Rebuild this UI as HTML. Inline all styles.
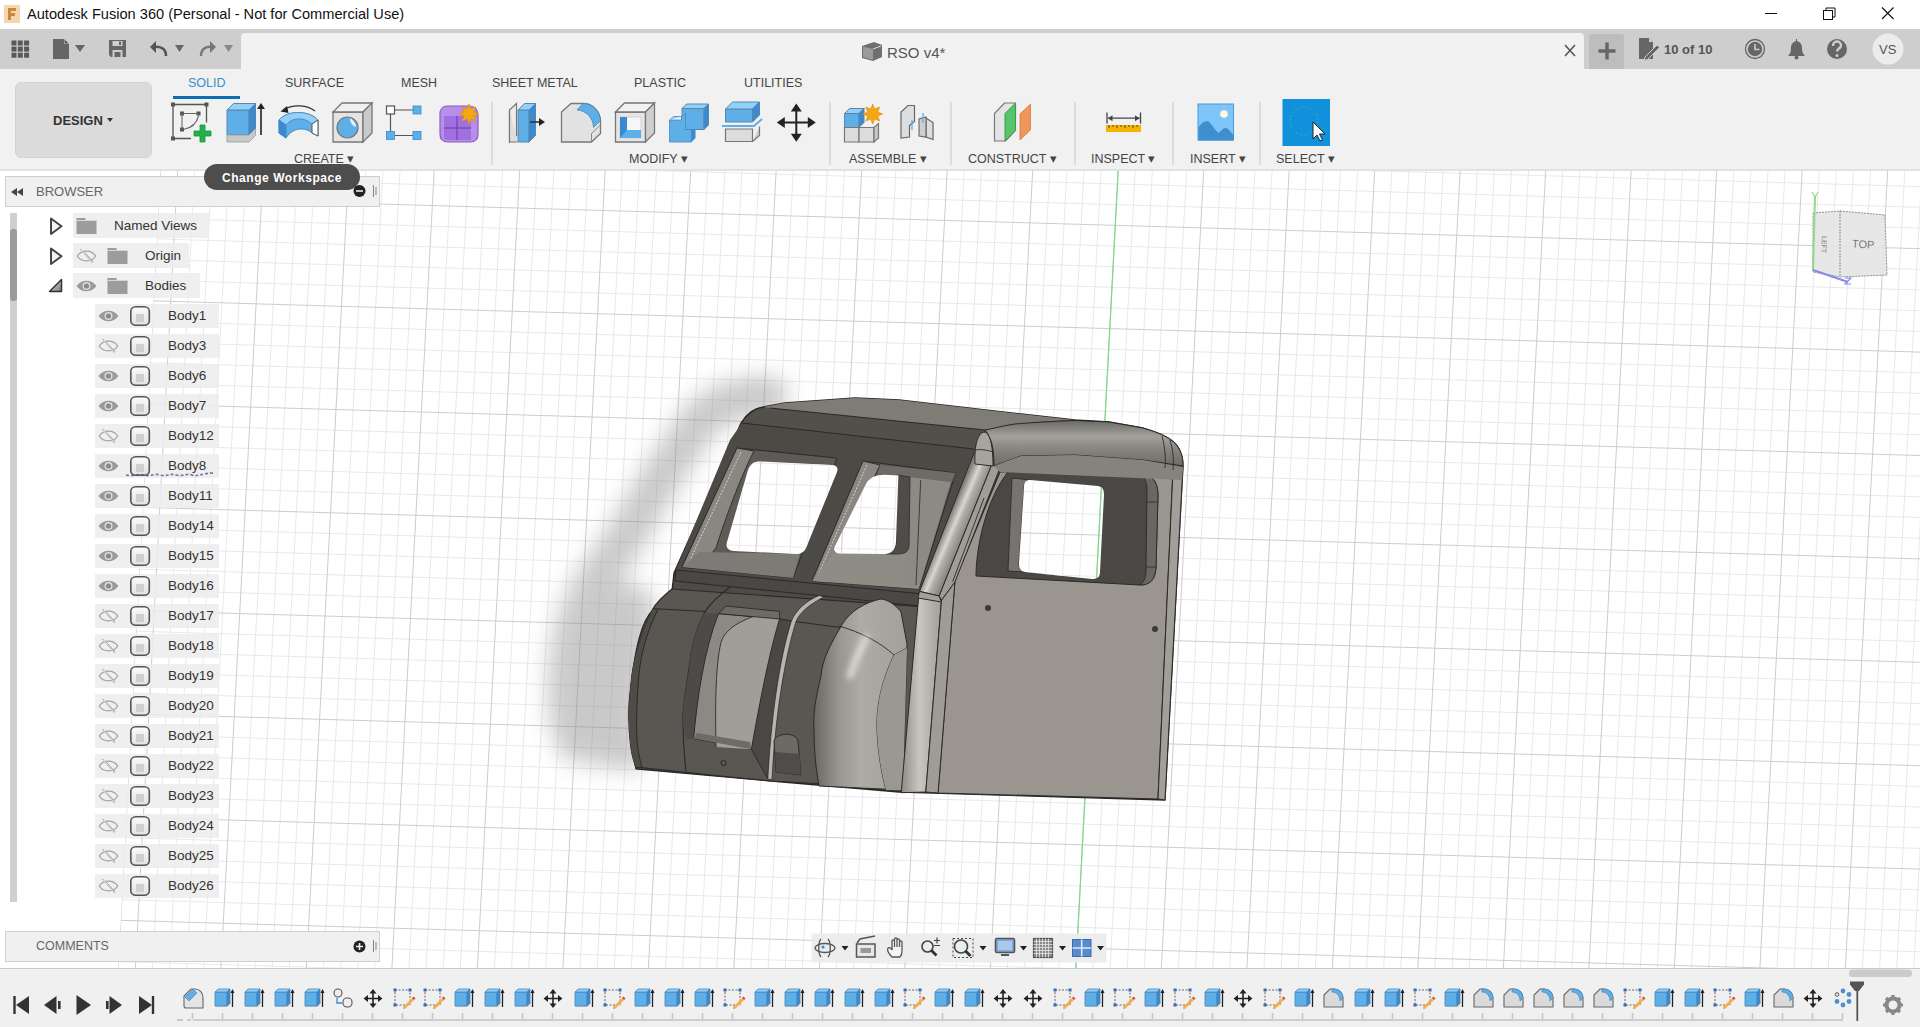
<!DOCTYPE html><html><head><meta charset="utf-8"><style>
*{box-sizing:border-box}
body{margin:0;width:1920px;height:1027px;position:relative;overflow:hidden;background:#f0f0f0;font-family:"Liberation Sans",sans-serif;color:#333}
.a{position:absolute}
.t{position:absolute;white-space:nowrap;line-height:1}
</style></head><body>
<svg class="a" style="left:0;top:0" width="1920" height="1027" viewBox="0 0 1920 1027"><defs><clipPath id="vpc"><rect x="0" y="170" width="1920" height="798"/></clipPath></defs><rect x="0" y="170" width="1920" height="798" fill="#fff"/><g clip-path="url(#vpc)"><clipPath id="gclip"><path d="M160.6 170L1920 170L1920 968L118.3 968Z"/></clipPath><g clip-path="url(#gclip)"><path d="M194.8 170L152.5 968M211.9 170L169.6 968M229.0 170L186.7 968M246.1 170L203.8 968M280.3 170L238.0 968M297.4 170L255.1 968M314.5 170L272.2 968M331.6 170L289.3 968M365.8 170L323.5 968M382.9 170L340.6 968M400.0 170L357.7 968M417.1 170L374.8 968M451.3 170L409.0 968M468.4 170L426.1 968M485.5 170L443.2 968M502.6 170L460.3 968M536.8 170L494.5 968M553.9 170L511.6 968M571.0 170L528.7 968M588.1 170L545.8 968M622.3 170L580.0 968M639.4 170L597.1 968M656.5 170L614.2 968M673.6 170L631.3 968M707.8 170L665.5 968M724.9 170L682.6 968M742.0 170L699.7 968M759.1 170L716.8 968M793.3 170L751.0 968M810.4 170L768.1 968M827.5 170L785.2 968M844.6 170L802.3 968M878.8 170L836.5 968M895.9 170L853.6 968M913.0 170L870.7 968M930.1 170L887.8 968M964.3 170L922.0 968M981.4 170L939.1 968M998.5 170L956.2 968M1015.6 170L973.3 968M1049.8 170L1007.5 968M1066.9 170L1024.6 968M1084.0 170L1041.7 968M1101.1 170L1058.8 968M1135.3 170L1093.0 968M1152.4 170L1110.1 968M1169.5 170L1127.2 968M1186.6 170L1144.3 968M1220.8 170L1178.5 968M1237.9 170L1195.6 968M1255.0 170L1212.7 968M1272.1 170L1229.8 968M1306.3 170L1264.0 968M1323.4 170L1281.1 968M1340.5 170L1298.2 968M1357.6 170L1315.3 968M1391.8 170L1349.5 968M1408.9 170L1366.6 968M1426.0 170L1383.7 968M1443.1 170L1400.8 968M1477.3 170L1435.0 968M1494.4 170L1452.1 968M1511.5 170L1469.2 968M1528.6 170L1486.3 968M1562.8 170L1520.5 968M1579.9 170L1537.6 968M1597.0 170L1554.7 968M1614.1 170L1571.8 968M1648.3 170L1606.0 968M1665.4 170L1623.1 968M1682.5 170L1640.2 968M1699.6 170L1657.3 968M1733.8 170L1691.5 968M1750.9 170L1708.6 968M1768.0 170L1725.7 968M1785.1 170L1742.8 968M1819.3 170L1777.0 968M1836.4 170L1794.1 968M1853.5 170L1811.2 968M1870.6 170L1828.3 968M1904.8 170L1862.5 968M1921.9 170L1879.6 968M1939.0 170L1896.7 968M1956.1 170L1913.8 968M0 110.3L1920 166.0M0 131.0L1920 186.6M0 151.6L1920 207.3M0 172.3L1920 228.0M0 213.7L1920 269.4M0 234.4L1920 290.0M0 255.0L1920 310.7M0 275.7L1920 331.4M0 317.1L1920 372.8M0 337.8L1920 393.4M0 358.4L1920 414.1M0 379.1L1920 434.8M0 420.5L1920 476.2M0 441.2L1920 496.8M0 461.8L1920 517.5M0 482.5L1920 538.2M0 523.9L1920 579.6M0 544.6L1920 600.2M0 565.2L1920 620.9M0 585.9L1920 641.6M0 627.3L1920 683.0M0 648.0L1920 703.6M0 668.6L1920 724.3M0 689.3L1920 745.0M0 730.7L1920 786.4M0 751.4L1920 807.0M0 772.0L1920 827.7M0 792.7L1920 848.4M0 834.1L1920 889.8M0 854.8L1920 910.4M0 875.4L1920 931.1M0 896.1L1920 951.8M0 937.5L1920 993.2M0 958.2L1920 1013.8" stroke="#e9e9e9" stroke-width="1" fill="none"/>
<path d="M160.6 170L118.3 968M177.7 170L135.4 968M263.2 170L220.9 968M348.7 170L306.4 968M434.2 170L391.9 968M519.7 170L477.4 968M605.2 170L562.9 968M690.7 170L648.4 968M776.2 170L733.9 968M861.7 170L819.4 968M947.2 170L904.9 968M1032.7 170L990.4 968M1118.2 170L1075.9 968M1203.7 170L1161.4 968M1289.2 170L1246.9 968M1374.7 170L1332.4 968M1460.2 170L1417.9 968M1545.7 170L1503.4 968M1631.2 170L1588.9 968M1716.7 170L1674.4 968M1802.2 170L1759.9 968M1887.7 170L1845.4 968M0 193.0L1920 248.7M0 296.4L1920 352.1M0 399.8L1920 455.5M0 503.2L1920 558.9M0 606.6L1920 662.3M0 710.0L1920 765.7M0 813.4L1920 869.1M0 916.8L1920 972.5" stroke="#cdcdcd" stroke-width="1" fill="none"/>
<path d="M1118.2 170L1075.9 968" stroke="#7fd87f" stroke-width="1.2" fill="none"/></g>
<defs>
<filter id="blur1" x="-50%" y="-50%" width="200%" height="200%"><feGaussianBlur stdDeviation="11"/></filter><filter id="blur2" x="-50%" y="-50%" width="200%" height="200%"><feGaussianBlur stdDeviation="3"/></filter>
<linearGradient id="fend" x1="0" y1="0" x2="1" y2="0"><stop offset="0" stop-color="#6a6762"/><stop offset="0.28" stop-color="#9a9791"/><stop offset="0.5" stop-color="#aeaba5"/><stop offset="1" stop-color="#a3a09a"/></linearGradient><linearGradient id="fhl" x1="0" y1="0" x2="0" y2="1"><stop offset="0" stop-color="#fff" stop-opacity="0.6"/><stop offset="1" stop-color="#fff" stop-opacity="0"/></linearGradient>
<linearGradient id="rroof" x1="0" y1="0" x2="0" y2="1">
<stop offset="0" stop-color="#6c6a66"/><stop offset="0.35" stop-color="#a3a19c"/><stop offset="0.6" stop-color="#8a8680"/><stop offset="1" stop-color="#6e6b66"/></linearGradient>
<linearGradient id="pill" x1="0" y1="0" x2="1" y2="0">
<stop offset="0" stop-color="#77746f"/><stop offset="0.45" stop-color="#d4d2cd"/><stop offset="1" stop-color="#8a8781"/></linearGradient>
<clipPath id="wins">
<path d="M760 461.5 L832 465 C837 465.5 838.5 468 837 472 L806 548 C804 552 801 554 796 554 L734 551 C728 550.5 725.5 547 727 542 L748 470 C750 464 754 461.5 760 461.5Z"/>
<path d="M884 474.8 L898.4 475.6 L896 542 C895.5 550 891 554 885 554 L840 553.4 C835 553.4 833 550 835 546 L866 484 C869 478 876 474.8 884 474.8Z"/>
<path d="M1030 480 L1098 486 C1103 487 1104 490 1104 495 L1100 572 C1100 577 1097 579 1092 579 L1025 572 C1020 571 1019 568 1019 563 L1024 487 C1024 482 1026 480 1030 480Z"/>
</clipPath>
</defs>
<!-- shadow -->
<g filter="url(#blur1)" opacity="0.45">
<path fill="none" stroke="#8a8a8a" stroke-width="40" stroke-linecap="round" stroke-linejoin="round" d="M768 396 C745 396 720 402 700 420 L662 476 L624 540 L590 590"/>
<path fill="#8a8a8a" d="M583 572 L650 590 L655 612 L640 772 L566 760 C549 742 546 702 549 662 C553 622 562 594 583 572 Z"/>
</g>
<!-- silhouette base -->
<path fill="#4d4b47" stroke="#262626" stroke-width="1.3" d="M741 423 C748 412 755 408 763 407 L785 403 L855 398 L899 400 L1021 414 L1075 420 L1109 422 L1143 428 C1160 433 1172 438 1178 447 C1183 455 1183 462 1183 466 L1165 800 L899 792 L771 781 L636 769 C630 740 628 712 630 698 C634 650 642 620 653 610 C660 600 668 594 672 591 L674 573 Z"/>
<!-- roof top -->
<path fill="#7f7c76" d="M763 407 L785 403 L855 398 L899 400 L1021 414 L1075 420 C1050 421 1021 422 985 430 L770 408 Z"/>
<path fill="#53504b" d="M742 423 C750 412 758 409 770 408 L985 430 L973 449 Z"/>
<path fill="#4d4a46" d="M742 423 L973 449 L985 470 L960 475 L675 572 L730 440 Z"/>
<path fill="none" stroke="#2a2a2a" stroke-width="1.1" d="M770 408 L985 430 M742 423 L974 449"/>
<!-- windshield frames (reveals) -->
<path fill="#5e5b56" stroke="#2a2a2a" stroke-width="1" d="M737 448 L837 458 L793 578 L682 567 Z"/>
<path fill="#8a8782" stroke="#2a2a2a" stroke-width="0.9" d="M737 448 L754 451 C744 470 728 510 716 548 L699 569 L682 567 Z"/>
<path fill="none" stroke="#d8d6d0" stroke-width="1" stroke-dasharray="2 1.5" d="M741 452 L688 564"/>
<path fill="#7e7b76" d="M699 552 L800 554 L793 578 L682 567 Z"/>
<path fill="#5e5b56" stroke="#2a2a2a" stroke-width="1" d="M863 461 L955.5 473 L919 589 L812 581 Z"/>
<path fill="#8a8782" stroke="#2a2a2a" stroke-width="0.9" d="M863 461 L880 465 C868 490 850 530 838 555 L828 583 L812 581 Z"/>
<path fill="none" stroke="#d8d6d0" stroke-width="1" stroke-dasharray="2 1.5" d="M867 465 L818 575"/>
<path fill="#6e6b66" d="M880 465 L955.5 473 L952 482 L878 474Z"/>
<path fill="#8f8c86" d="M834 553 L912 553 L919 589 L812 581 Z"/>
<path fill="#8d8a84" d="M909 477 L951 482 L919 588 L905 584 Z"/>
<path fill="none" stroke="#2a2a2a" stroke-width="0.8" d="M920.7 480 L916 585"/>
<path fill="#4f4d49" stroke="#2a2a2a" stroke-width="0.8" d="M897 475 L910 477 L909 545 C909 551 905 554 898 554 L886 554 C893 552 896 549 896 543 Z"/>
<!-- belt band -->
<path fill="#4a4844" stroke="#2a2a2a" stroke-width="1" d="M676 570 L923 594 L940 598 L940 608 L675 581 Z"/>
<!-- nose lower -->
<path fill="#5a5752" stroke="#2a2a2a" stroke-width="1.1" d="M672 589 L940 608 L935 790 L771 781 L730 777 L636 767 C633 760 631 752 630 740 C628 720 629 700 630.5 688 C632 668 636 650 644 630 C648 620 651 612 653 608.6 C657 602 662 597 672 589 Z"/>
<path fill="#4f4c48" d="M653 608.6 L658 609.6 C650 625 643 645 640 666 C637 690 636 720 637 740 C638 752 640 760 642 767 L636 767 C633 760 631 752 630 740 C628 720 629 700 630.5 688 C632 668 636 650 644 630 C648 620 651 612 653 608.6Z"/>
<path fill="none" stroke="#2a2a2a" stroke-width="1" d="M653 608.6 L706 611.5 M718.5 613.6 L780 619 L791.4 621 L840 627.5 M658 609.6 C650 625 643 645 640 666 C637 690 636 720 637 740 C638 752 640 760 642 767"/>
<path fill="none" stroke="#2a2a2a" stroke-width="1.1" d="M730 587 C718 596 709 605 704.3 612.9 C696 630 691 648 689.3 666.4 C686 690 683 705 682.9 720 C683 740 684 755 686 771.4"/>
<path fill="#4d4b47" d="M704.3 612.9 L718.5 613.6 C710 640 704 670 699 700 C697 715 695 728 693.6 738.6 L686 740 C684 730 683 725 682.9 720 C683 705 686 690 689.3 666.4 C691 648 696 630 704.3 612.9Z"/>
<!-- headlight recess -->
<path fill="#8c8984" stroke="#2a2a2a" stroke-width="1" d="M718.5 613.6 L779.6 619 C770 650 760 700 751.4 749.3 L693.6 738.6 C697 700 704 650 718.5 613.6 Z"/>
<path fill="#a19e98" d="M755 615.7 L779.6 619 C770 650 760 700 751.4 749.3 L716 747 C715 700 716 665 720.7 643.5 C724 632 733 624 755 615.7Z"/>
<path fill="none" stroke="#2a2a2a" stroke-width="0.9" d="M755 615.7 C733 624 724 632 720.7 643.5 C716 665 715 700 716 747"/>
<path fill="#6e6b66" stroke="#2a2a2a" stroke-width="0.9" d="M726 606 L779.6 611.4 L779.6 619 L718.5 613.6 Z"/>
<path fill="#6e6b66" d="M693.6 738.6 L751.4 749.3 L750 742 L697 733Z"/>
<path fill="#4a4844" stroke="#2a2a2a" stroke-width="0.9" d="M779.6 619 L791.4 621 C782 650 773 700 767.8 779 L751.4 749.3 C760 700 770 650 779.6 619Z"/>
<path fill="#b9b6b0" stroke="#2a2a2a" stroke-width="0.7" d="M819.2 595.4 L824 597 C810 604 800 612 796 621.5 C784 660 775 720 772 779.5 L767.8 779.3 C771 720 779 660 791.4 621 C796 610 806 601 819.2 595.4Z"/>
<path fill="#6c6a65" stroke="#2a2a2a" stroke-width="1" d="M774 741 C776 733 795 731 798 741 L801 775 L776 772 Z"/>
<path fill="#4f4d49" d="M775 752 L799.5 754 L801 775 L776 772 Z"/>
<circle cx="723.6" cy="763" r="2.6" fill="none" stroke="#2a2a2a" stroke-width="1"/>
<!-- fender -->
<path fill="url(#fend)" stroke="#2a2a2a" stroke-width="1" d="M881 599 C865 602 850 612 843 623 C830 645 822 660 821 676 C815 700 813 715 814 730 C814 750 816 770 819 786 L903 790 L907 644 L901 612 C895 604 888 600 881 599 Z"/>
<path fill="none" stroke="#2a2a2a" stroke-width="0.9" d="M839 626 C860 632 880 642 894 655 L907 648 M894 655 C882 680 876 705 877 730 C878 755 882 775 886 790"/>
<path fill="#9b9891" d="M894 655 C882 680 876 705 877 730 C878 755 882 775 886 790 L903 790 L907 648Z"/>
<path filter="url(#blur2)" fill="none" stroke="#f0eee8" stroke-width="6" stroke-linecap="round" opacity="0.85" d="M866 638 C860 650 854 662 850 676"/>
<!-- door -->
<path fill="#9a968f" stroke="#2a2a2a" stroke-width="1.1" d="M1000 472 L1173 470 L1158 799 L938 793 L955 580 Z"/>
<!-- A-pillar -->
<linearGradient id="pillg" gradientUnits="userSpaceOnUse" x1="946.7" y1="522" x2="965.3" y2="530"><stop offset="0" stop-color="#7f7c77"/><stop offset="0.4" stop-color="#d9d7d2"/><stop offset="0.6" stop-color="#b2afa9"/><stop offset="1" stop-color="#8c8983"/></linearGradient>
<linearGradient id="pillg2" x1="0" y1="0" x2="1" y2="0"><stop offset="0" stop-color="#8e8b85"/><stop offset="0.45" stop-color="#c9c6c0"/><stop offset="1" stop-color="#a19e98"/></linearGradient>
<path fill="url(#pillg2)" stroke="#2a2a2a" stroke-width="1" d="M919 593 L941.5 600 L925.8 792 L901.2 792.7 Z"/>
<path fill="#9f9c96" stroke="#2a2a2a" stroke-width="1" d="M941.5 600 L954.9 582 L938.1 793 L925.8 792 Z"/>
<path fill="#a09d97" stroke="#2a2a2a" stroke-width="1" d="M991.6 464.8 L1000 468 L954.9 582 L941.5 600 L939 596 Z"/>
<path fill="none" stroke="#2a2a2a" stroke-width="0.9" d="M984 498 L952.6 581.7"/>
<path fill="url(#pillg)" stroke="#2a2a2a" stroke-width="1" d="M974 453 L991.6 464.8 L939 596 L919.5 591.4 Z"/>
<path fill="#a3a09a" stroke="#2a2a2a" stroke-width="1" d="M919.5 591.4 L939 596 L941.5 602 L918 598 Z"/>
<path fill="#a7a49e" stroke="#2a2a2a" stroke-width="1" d="M975 464 C974 445 978 433 984 432 C990 432 993 445 993 466 Z"/>
<path fill="none" stroke="#2a2a2a" stroke-width="0.9" d="M975 450 C980 449 988 450 993 452"/>
<!-- side window recess -->
<path fill="#a29f99" stroke="#2a2a2a" stroke-width="1" d="M1173 470 L1183 466 L1165 800 L1158 799 Z"/>
<path fill="#4a4844" stroke="#2a2a2a" stroke-width="1" d="M1009 470.6 L1137 472 C1150 473 1158 480 1158 495 L1156 568 C1155 580 1150 585 1140 585 L976 576 C976 550 985 500 1009 470.6 Z"/>
<path fill="#6a6762" stroke="#2a2a2a" stroke-width="0.9" d="M1137 472 C1150 473 1158 480 1158 495 L1156 568 C1155 580 1150 585 1140 585 C1144 582 1146 578 1146 570 L1147 490 C1147 480 1143 474 1137 472 Z"/>
<path fill="none" stroke="#2a2a2a" stroke-width="0.8" d="M1147 502 L1158 502 M1146 567 L1156 567"/>
<path fill="#77746f" stroke="#2a2a2a" stroke-width="0.8" d="M1012 478 L1030 480 C1025 481 1024 484 1024 488 L1019 563 C1019 568 1020 571 1025 572 L1008 571 Z"/>
<!-- right curved roof -->
<path fill="url(#rroof)" stroke="#2a2a2a" stroke-width="1" d="M985 430 C1000 427 1010 424 1021 423.5 C1040 422 1060 421 1075 420.5 L1109 422 L1143 428 C1160 433 1172 438 1178 447 C1183 455 1183 462 1183 466 L1143 460 L1075 455 L1021 456 L994 466 C994 450 992 438 985 430 Z"/>
<path fill="#86837d" d="M994 466 L1021 456 L1075 455 L1143 460 L1183 467 L1182 480 L1000 472 Z"/><path fill="none" stroke="#2a2a2a" stroke-width="0.9" d="M1162 436 C1165 448 1166 458 1165 468 M1170 440 C1173 450 1174 460 1173 470"/>
<!-- rivets -->
<circle cx="988" cy="608" r="3" fill="#3a3a3a"/><circle cx="1155" cy="629" r="3" fill="#3a3a3a"/>
<!-- window holes -->
<g clip-path="url(#wins)"><rect x="700" y="450" width="420" height="140" fill="#fff"/><clipPath id="gclip"><path d="M160.6 170L1920 170L1920 968L118.3 968Z"/></clipPath><g clip-path="url(#gclip)"><path d="M194.8 170L152.5 968M211.9 170L169.6 968M229.0 170L186.7 968M246.1 170L203.8 968M280.3 170L238.0 968M297.4 170L255.1 968M314.5 170L272.2 968M331.6 170L289.3 968M365.8 170L323.5 968M382.9 170L340.6 968M400.0 170L357.7 968M417.1 170L374.8 968M451.3 170L409.0 968M468.4 170L426.1 968M485.5 170L443.2 968M502.6 170L460.3 968M536.8 170L494.5 968M553.9 170L511.6 968M571.0 170L528.7 968M588.1 170L545.8 968M622.3 170L580.0 968M639.4 170L597.1 968M656.5 170L614.2 968M673.6 170L631.3 968M707.8 170L665.5 968M724.9 170L682.6 968M742.0 170L699.7 968M759.1 170L716.8 968M793.3 170L751.0 968M810.4 170L768.1 968M827.5 170L785.2 968M844.6 170L802.3 968M878.8 170L836.5 968M895.9 170L853.6 968M913.0 170L870.7 968M930.1 170L887.8 968M964.3 170L922.0 968M981.4 170L939.1 968M998.5 170L956.2 968M1015.6 170L973.3 968M1049.8 170L1007.5 968M1066.9 170L1024.6 968M1084.0 170L1041.7 968M1101.1 170L1058.8 968M1135.3 170L1093.0 968M1152.4 170L1110.1 968M1169.5 170L1127.2 968M1186.6 170L1144.3 968M1220.8 170L1178.5 968M1237.9 170L1195.6 968M1255.0 170L1212.7 968M1272.1 170L1229.8 968M1306.3 170L1264.0 968M1323.4 170L1281.1 968M1340.5 170L1298.2 968M1357.6 170L1315.3 968M1391.8 170L1349.5 968M1408.9 170L1366.6 968M1426.0 170L1383.7 968M1443.1 170L1400.8 968M1477.3 170L1435.0 968M1494.4 170L1452.1 968M1511.5 170L1469.2 968M1528.6 170L1486.3 968M1562.8 170L1520.5 968M1579.9 170L1537.6 968M1597.0 170L1554.7 968M1614.1 170L1571.8 968M1648.3 170L1606.0 968M1665.4 170L1623.1 968M1682.5 170L1640.2 968M1699.6 170L1657.3 968M1733.8 170L1691.5 968M1750.9 170L1708.6 968M1768.0 170L1725.7 968M1785.1 170L1742.8 968M1819.3 170L1777.0 968M1836.4 170L1794.1 968M1853.5 170L1811.2 968M1870.6 170L1828.3 968M1904.8 170L1862.5 968M1921.9 170L1879.6 968M1939.0 170L1896.7 968M1956.1 170L1913.8 968M0 110.3L1920 166.0M0 131.0L1920 186.6M0 151.6L1920 207.3M0 172.3L1920 228.0M0 213.7L1920 269.4M0 234.4L1920 290.0M0 255.0L1920 310.7M0 275.7L1920 331.4M0 317.1L1920 372.8M0 337.8L1920 393.4M0 358.4L1920 414.1M0 379.1L1920 434.8M0 420.5L1920 476.2M0 441.2L1920 496.8M0 461.8L1920 517.5M0 482.5L1920 538.2M0 523.9L1920 579.6M0 544.6L1920 600.2M0 565.2L1920 620.9M0 585.9L1920 641.6M0 627.3L1920 683.0M0 648.0L1920 703.6M0 668.6L1920 724.3M0 689.3L1920 745.0M0 730.7L1920 786.4M0 751.4L1920 807.0M0 772.0L1920 827.7M0 792.7L1920 848.4M0 834.1L1920 889.8M0 854.8L1920 910.4M0 875.4L1920 931.1M0 896.1L1920 951.8M0 937.5L1920 993.2M0 958.2L1920 1013.8" stroke="#e9e9e9" stroke-width="1" fill="none"/>
<path d="M160.6 170L118.3 968M177.7 170L135.4 968M263.2 170L220.9 968M348.7 170L306.4 968M434.2 170L391.9 968M519.7 170L477.4 968M605.2 170L562.9 968M690.7 170L648.4 968M776.2 170L733.9 968M861.7 170L819.4 968M947.2 170L904.9 968M1032.7 170L990.4 968M1118.2 170L1075.9 968M1203.7 170L1161.4 968M1289.2 170L1246.9 968M1374.7 170L1332.4 968M1460.2 170L1417.9 968M1545.7 170L1503.4 968M1631.2 170L1588.9 968M1716.7 170L1674.4 968M1802.2 170L1759.9 968M1887.7 170L1845.4 968M0 193.0L1920 248.7M0 296.4L1920 352.1M0 399.8L1920 455.5M0 503.2L1920 558.9M0 606.6L1920 662.3M0 710.0L1920 765.7M0 813.4L1920 869.1M0 916.8L1920 972.5" stroke="#cdcdcd" stroke-width="1" fill="none"/>
<path d="M1118.2 170L1075.9 968" stroke="#7fd87f" stroke-width="1.2" fill="none"/></g>
</g>
</g></svg>
<div class="a" style="left:0;top:0;width:1920px;height:29px;background:#fff"></div>
<div class="t" style="left:27px;top:7px;font-size:14.6px;color:#111">Autodesk Fusion 360 (Personal - Not for Commercial Use)</div>
<div class="a" style="left:0;top:29px;width:1920px;height:40px;background:#cecece"></div>
<div class="a" style="left:241px;top:33px;width:1343px;height:36px;background:#f2f2f2;border-radius:4px 4px 0 0"></div>
<div class="a" style="left:1589px;top:34px;width:35px;height:35px;background:#bdbdbd;border-radius:3px 3px 0 0"></div>
<div class="t" style="left:887px;top:45px;font-size:15px;color:#555">RSO v4*</div>
<div class="t" style="left:1664px;top:43px;font-size:13px;color:#555;font-weight:bold">10 of 10</div>
<div class="a" style="left:0;top:69px;width:1920px;height:101px;background:#f1f1f1"></div>
<div class="a" style="left:0;top:169px;width:1920px;height:2px;background:#e2e2e2"></div>
<div class="a" style="left:15px;top:82px;width:137px;height:76px;background:#dbdbdb;border:1px solid #d3d3d3;border-radius:6px"></div>
<div class="t" style="left:53px;top:114px;font-size:13px;color:#333;font-weight:bold">DESIGN</div>
<div class="t" style="left:188px;top:77px;font-size:12.5px;color:#3a8fc8">SOLID</div>
<div class="t" style="left:285px;top:77px;font-size:12.5px;color:#444">SURFACE</div>
<div class="t" style="left:401px;top:77px;font-size:12.5px;color:#444">MESH</div>
<div class="t" style="left:492px;top:77px;font-size:12.5px;color:#444">SHEET METAL</div>
<div class="t" style="left:634px;top:77px;font-size:12.5px;color:#444">PLASTIC</div>
<div class="t" style="left:744px;top:77px;font-size:12.5px;color:#444">UTILITIES</div>
<div class="a" style="left:173px;top:96px;width:67px;height:3px;background:#0b6fb3"></div>
<div class="t" style="left:294px;top:153px;font-size:12.5px;color:#444">CREATE &#9662;</div>
<div class="t" style="left:629px;top:153px;font-size:12.5px;color:#444">MODIFY &#9662;</div>
<div class="t" style="left:849px;top:153px;font-size:12.5px;color:#444">ASSEMBLE &#9662;</div>
<div class="t" style="left:968px;top:153px;font-size:12.5px;color:#444">CONSTRUCT &#9662;</div>
<div class="t" style="left:1091px;top:153px;font-size:12.5px;color:#444">INSPECT &#9662;</div>
<div class="t" style="left:1190px;top:153px;font-size:12.5px;color:#444">INSERT &#9662;</div>
<div class="t" style="left:1276px;top:153px;font-size:12.5px;color:#444">SELECT &#9662;</div>
<div class="a" style="left:491px;top:102px;width:2px;height:63px;background:#dcdcdc"></div>
<div class="a" style="left:829px;top:102px;width:2px;height:63px;background:#dcdcdc"></div>
<div class="a" style="left:950px;top:102px;width:2px;height:63px;background:#dcdcdc"></div>
<div class="a" style="left:1074px;top:102px;width:2px;height:63px;background:#dcdcdc"></div>
<div class="a" style="left:1172px;top:102px;width:2px;height:63px;background:#dcdcdc"></div>
<div class="a" style="left:1259px;top:102px;width:2px;height:63px;background:#dcdcdc"></div>

<div class="a" style="left:5px;top:176px;width:375px;height:31px;background:#f0f0f0;border:1px solid #cfcfcf"></div>
<div class="t" style="left:36px;top:185px;font-size:13px;color:#666">BROWSER</div>
<div class="a" style="left:10px;top:213px;width:7px;height:689px;background:#cfcfcf"></div>
<div class="a" style="left:10px;top:229px;width:7px;height:72px;background:#9b9b9b;border-radius:3px"></div>
<div class="a" style="left:73px;top:213px;width:136px;height:25px;background:rgba(236,236,236,.85)"></div>
<div class="t" style="left:114px;top:219px;font-size:13.5px;color:#333">Named Views</div>
<div class="a" style="left:73px;top:243px;width:116px;height:25px;background:rgba(236,236,236,.85)"></div>
<div class="t" style="left:145px;top:249px;font-size:13.5px;color:#333">Origin</div>
<div class="a" style="left:73px;top:273px;width:127px;height:25px;background:rgba(236,236,236,.85)"></div>
<div class="t" style="left:145px;top:279px;font-size:13.5px;color:#333">Bodies</div>
<div class="a" style="left:95px;top:304px;width:124px;height:24px;background:rgba(236,236,236,.85)"></div>
<div class="t" style="left:168px;top:309px;font-size:13.5px;color:#333">Body1</div>
<div class="a" style="left:95px;top:334px;width:124px;height:24px;background:rgba(236,236,236,.85)"></div>
<div class="t" style="left:168px;top:339px;font-size:13.5px;color:#333">Body3</div>
<div class="a" style="left:95px;top:364px;width:124px;height:24px;background:rgba(236,236,236,.85)"></div>
<div class="t" style="left:168px;top:369px;font-size:13.5px;color:#333">Body6</div>
<div class="a" style="left:95px;top:394px;width:124px;height:24px;background:rgba(236,236,236,.85)"></div>
<div class="t" style="left:168px;top:399px;font-size:13.5px;color:#333">Body7</div>
<div class="a" style="left:95px;top:424px;width:124px;height:24px;background:rgba(236,236,236,.85)"></div>
<div class="t" style="left:168px;top:429px;font-size:13.5px;color:#333">Body12</div>
<div class="a" style="left:95px;top:454px;width:124px;height:24px;background:rgba(236,236,236,.85)"></div>
<div class="t" style="left:168px;top:459px;font-size:13.5px;color:#333">Body8</div>
<div class="a" style="left:95px;top:484px;width:124px;height:24px;background:rgba(236,236,236,.85)"></div>
<div class="t" style="left:168px;top:489px;font-size:13.5px;color:#333">Body11</div>
<div class="a" style="left:95px;top:514px;width:124px;height:24px;background:rgba(236,236,236,.85)"></div>
<div class="t" style="left:168px;top:519px;font-size:13.5px;color:#333">Body14</div>
<div class="a" style="left:95px;top:544px;width:124px;height:24px;background:rgba(236,236,236,.85)"></div>
<div class="t" style="left:168px;top:549px;font-size:13.5px;color:#333">Body15</div>
<div class="a" style="left:95px;top:574px;width:124px;height:24px;background:rgba(236,236,236,.85)"></div>
<div class="t" style="left:168px;top:579px;font-size:13.5px;color:#333">Body16</div>
<div class="a" style="left:95px;top:604px;width:124px;height:24px;background:rgba(236,236,236,.85)"></div>
<div class="t" style="left:168px;top:609px;font-size:13.5px;color:#333">Body17</div>
<div class="a" style="left:95px;top:634px;width:124px;height:24px;background:rgba(236,236,236,.85)"></div>
<div class="t" style="left:168px;top:639px;font-size:13.5px;color:#333">Body18</div>
<div class="a" style="left:95px;top:664px;width:124px;height:24px;background:rgba(236,236,236,.85)"></div>
<div class="t" style="left:168px;top:669px;font-size:13.5px;color:#333">Body19</div>
<div class="a" style="left:95px;top:694px;width:124px;height:24px;background:rgba(236,236,236,.85)"></div>
<div class="t" style="left:168px;top:699px;font-size:13.5px;color:#333">Body20</div>
<div class="a" style="left:95px;top:724px;width:124px;height:24px;background:rgba(236,236,236,.85)"></div>
<div class="t" style="left:168px;top:729px;font-size:13.5px;color:#333">Body21</div>
<div class="a" style="left:95px;top:754px;width:124px;height:24px;background:rgba(236,236,236,.85)"></div>
<div class="t" style="left:168px;top:759px;font-size:13.5px;color:#333">Body22</div>
<div class="a" style="left:95px;top:784px;width:124px;height:24px;background:rgba(236,236,236,.85)"></div>
<div class="t" style="left:168px;top:789px;font-size:13.5px;color:#333">Body23</div>
<div class="a" style="left:95px;top:814px;width:124px;height:24px;background:rgba(236,236,236,.85)"></div>
<div class="t" style="left:168px;top:819px;font-size:13.5px;color:#333">Body24</div>
<div class="a" style="left:95px;top:844px;width:124px;height:24px;background:rgba(236,236,236,.85)"></div>
<div class="t" style="left:168px;top:849px;font-size:13.5px;color:#333">Body25</div>
<div class="a" style="left:95px;top:874px;width:124px;height:24px;background:rgba(236,236,236,.85)"></div>
<div class="t" style="left:168px;top:879px;font-size:13.5px;color:#333">Body26</div>
<div class="a" style="left:5px;top:931px;width:375px;height:31px;background:#f0f0f0;border:1px solid #cfcfcf"></div>
<div class="t" style="left:36px;top:940px;font-size:12.5px;color:#666">COMMENTS</div>
<div class="a" style="left:204px;top:164px;width:156px;height:26px;background:#4d4d4d;border-radius:13px"></div>
<div class="t" style="left:222px;top:172px;font-size:12px;letter-spacing:0.55px;color:#fff;font-weight:bold">Change Workspace</div>
<div class="a" style="left:0;top:968px;width:1920px;height:59px;background:#f0f0f0;border-top:1px solid #c9c9c9"></div>
<svg class="a" style="left:0;top:0" width="1920" height="1027" viewBox="0 0 1920 1027"><rect x="4" y="5" width="16" height="18" fill="#f6d6b0"/><path d="M8 8h8v3h-5v2h4v3h-4v4h-3z" fill="#c88a3a"/>
<rect x="11.5" y="40.5" width="5" height="5" fill="#595959"/>
<rect x="11.5" y="46.6" width="5" height="5" fill="#595959"/>
<rect x="11.5" y="52.7" width="5" height="5" fill="#595959"/>
<rect x="17.8" y="40.5" width="5" height="5" fill="#595959"/>
<rect x="17.8" y="46.6" width="5" height="5" fill="#595959"/>
<rect x="17.8" y="52.7" width="5" height="5" fill="#595959"/>
<rect x="24.1" y="40.5" width="5" height="5" fill="#595959"/>
<rect x="24.1" y="46.6" width="5" height="5" fill="#595959"/>
<rect x="24.1" y="52.7" width="5" height="5" fill="#595959"/>
<path d="M53 39h11l5 5v15h-16z" fill="#666"/><path d="M64 39v5h5z" fill="#cecece"/><path d="M64.5 39.5l4 4h-4z" fill="#555"/>
<path d="M75 45h10l-5 7z" fill="#666"/>
<path d="M109 40h17v17h-15l-2-2z" fill="#666"/><rect x="112.5" y="41" width="10" height="5" fill="#cecece"/><rect x="119" y="41.5" width="2" height="3.5" fill="#666"/><rect x="112.5" y="50" width="10" height="7" fill="#cecece"/><rect x="114.5" y="52" width="6" height="5" fill="#666"/>
<path d="M166 56 C166 48 160 46 153 47" fill="none" stroke="#555" stroke-width="2.6"/><path d="M150 47l6-6v12z" fill="#555"/>
<path d="M175 45h9l-4.5 7z" fill="#666"/>
<path d="M201 56 C201 48 207 46 213 47" fill="none" stroke="#777" stroke-width="2.4"/><path d="M216 47l-6-6v12z" fill="#777"/>
<path d="M224 45h9l-4.5 7z" fill="#888"/>
<path d="M862 46l12-4l8 3v12l-9 4l-11-3z" fill="#6f6f6f"/><path d="M863 46.5l10 2.5v11l-10-3z" fill="#9a9a9a"/><path d="M873 49l8-3" stroke="#ddd" stroke-width="1"/>
<path d="M1565 45l10 11M1575 45l-10 11" stroke="#555" stroke-width="1.6"/>
<path d="M1598.5 51h17M1607 42.5v17" stroke="#666" stroke-width="3.5"/>
<path d="M1639 38h10l4 4v17h-14z" fill="#666"/><path d="M1649 38v4h4z" fill="#cecece"/><path d="M1645 57l12-12l2.5 2.5l-12 12l-3.5 1z" fill="#666" stroke="#cecece" stroke-width="1"/>
<circle cx="1755" cy="49" r="9.5" fill="none" stroke="#666" stroke-width="1.3"/><circle cx="1755" cy="49" r="7.2" fill="#666"/><path d="M1755 44v5.5h4.5" fill="none" stroke="#cecece" stroke-width="1.6"/>
<path d="M1788 56h17c-2-2-3-4-3-8c0-4-2-6-5-7v-2h-1v2c-3 1-5 3-5 7c0 4-1 6-3 8z" fill="#666"/><circle cx="1796.5" cy="57.5" r="2" fill="#666"/>
<circle cx="1837" cy="49" r="10" fill="#666"/><path d="M1833 46c0-3 2-4.5 4-4.5s4 1.5 4 4c0 3-4 3-4 6" fill="none" stroke="#cecece" stroke-width="2.4"/><circle cx="1837" cy="55.5" r="1.5" fill="#cecece"/>
<circle cx="1888" cy="49" r="15.5" fill="#ececec"/>
<path d="M1765 13.5h12" stroke="#111" stroke-width="1"/>
<rect x="1823.5" y="10.5" width="9" height="9" fill="none" stroke="#111" stroke-width="1"/><path d="M1826 10.5v-2.5h9v9h-2.5" fill="none" stroke="#111" stroke-width="1"/>
<path d="M1882 7.5l11.5 11.5M1893.5 7.5l-11.5 11.5" stroke="#111" stroke-width="1.1"/>
<path d="M107 118h6l-3 4z" fill="#333"/><path d="M173 104.5h33.5M173 104.5v34M173 138.5h18M206.5 104.5v18" stroke="#555" stroke-width="1.3" fill="none"/>
<rect x="171" y="102.5" width="4" height="4" fill="#555"/>
<rect x="204.5" y="102.5" width="4" height="4" fill="#555"/>
<rect x="171" y="136.5" width="4" height="4" fill="#555"/>
<rect x="180" y="111.5" width="4" height="4" fill="#555"/>
<rect x="196.5" y="111.5" width="4" height="4" fill="#555"/>
<rect x="180" y="127.5" width="4" height="4" fill="#555"/>
<path d="M182 113.5v16M182 113.5h16.5M198.5 116c-2 8-7 12-15 13.5" stroke="#666" stroke-width="1.1" fill="none"/>
<path d="M200 125h5v6h6v5h-6v6h-5v-6h-6v-5h6z" fill="#21b04b" stroke="#159a3c" stroke-width="0.8"/>
<path d="M227 110h22v25h-22z" fill="#5eaee8" stroke="#5a86ad" stroke-width="1"/><path d="M227 110l6.5 -6.5h22l-6.5 6.5z" fill="#93d0f7" stroke="#5a86ad" stroke-width="1"/><path d="M249 110l6.5 -6.5v25l-6.5 6.5z" fill="#3a8ad0" stroke="#5a86ad" stroke-width="1"/>
<path d="M227 135h22l6.5-6.5v7l-6.5 6.5h-22z" fill="#c9c9c9" stroke="#9a9a9a" stroke-width="0.8"/>
<path d="M261 135V107" stroke="#222" stroke-width="1.6"/><path d="M257 109l4-6l4 6z" fill="#222"/>
<path d="M279 120 C287 110 309 110 318 120 L318 136 L312 133 C305 127 293 127 286 138 L279 133 Z" fill="#5eaee8" stroke="#4a86ba" stroke-width="0.9"/>
<path d="M279 120 C287 110 309 110 318 120 L312 124 C305 117 292 117 286 125 Z" fill="#93d0f7" stroke="#4a86ba" stroke-width="0.8"/>
<path d="M279 120 L286 125 L286 138 L279 133 Z" fill="#3a8ad0" stroke="#4a86ba" stroke-width="0.8"/>
<path d="M312 124 L318 120 L318 136 L312 133 Z" fill="#fff" stroke="#555" stroke-width="1"/>
<path d="M315 111c-8-6-21-7-30-2" fill="none" stroke="#333" stroke-width="1.3"/><path d="M280.5 111.5l6.5-5.5l1.5 7z" fill="#222"/>
<path d="M333 112h30v30h-30z" fill="#e4e4e4" stroke="#777" stroke-width="1.3"/><path d="M333 112l9 -9h30l-9 9z" fill="#f0f0f0" stroke="#777" stroke-width="1.3"/><path d="M363 112l9 -9v30l-9 9z" fill="#c9c9c9" stroke="#777" stroke-width="1.3"/>
<circle cx="347.5" cy="127.5" r="10.5" fill="#5eaee8" stroke="#777" stroke-width="1.2"/><path d="M350 118c3 2 6 5 6 9c-3-1-6-4-6-9z" fill="#eaf4fb"/>
<path d="M394.5 110h22M390.5 114v21M394.5 135.5h22" stroke="#555" stroke-width="1.2"/>
<rect x="386.5" y="106" width="8" height="8" fill="#fff" stroke="#555" stroke-width="1.2"/>
<rect x="413" y="106" width="8" height="8" fill="#5eaee8" stroke="#3a8ad0" stroke-width="0.8"/>
<rect x="386.5" y="131.5" width="8" height="8" fill="#5eaee8" stroke="#3a8ad0" stroke-width="0.8"/>
<rect x="413" y="131.5" width="8" height="8" fill="#5eaee8" stroke="#3a8ad0" stroke-width="0.8"/>
<path d="M447 106h22c6 0 9 4 9 10v18c0 5-3 8-8 8h-22c-5 0-8-3-8-8v-20c0-5 3-8 7-8z" fill="#b98ee8" stroke="#8a5cc8" stroke-width="1.2"/>
<path d="M444 116h27v24h-24c-2 0-3-1-3-3z" fill="#a070e0"/><path d="M457 116v24M444 128h27" stroke="#6a3ab0" stroke-width="1"/>
<path d="M469 104l2 5l5-2l-2 5l5 2l-5 2l2 5l-5-2l-2 5l-2-5l-5 2l2-5l-5-2l5-2l-2-5l5 2z" fill="#f3a712" stroke="#e28a00" stroke-width="0.6"/>
<path d="M509.5 142V110l7-6.5v32z" fill="#ececec" stroke="#777" stroke-width="1.2"/><path d="M509.5 110v32h8" fill="#ddd" stroke="#777" stroke-width="1.2"/>
<path d="M518 110h11v32h-11z" fill="#5eaee8" stroke="#5a86ad" stroke-width="1"/><path d="M518 110l6.5 -6.5h11l-6.5 6.5z" fill="#93d0f7" stroke="#5a86ad" stroke-width="1"/><path d="M529 110l6.5 -6.5v32l-6.5 6.5z" fill="#3a8ad0" stroke="#5a86ad" stroke-width="1"/>
<path d="M530 122h10" stroke="#333" stroke-width="1.6"/><path d="M539 118l6 4l-6 4z" fill="#222"/>
<path d="M561.5 112l9.5-8.5h12c10 0 17 8 17.5 17v13l-9 8.5h-30z" fill="#e2e2e2" stroke="#777" stroke-width="1.3"/>
<path d="M577 110l6-6.5c10 0 17 8 17.5 17l-7 7c0-9-7-17-16.5-17.5z" fill="#5eaee8" stroke="#4a86ba" stroke-width="0.8"/>
<path d="M591.5 142v-8.5l9-8.5" fill="none" stroke="#888" stroke-width="1"/>
<path d="M615.5 112h30v30h-30z" fill="#e6e6e6" stroke="#777" stroke-width="1.3"/><path d="M615.5 112l9 -9h30l-9 9z" fill="#f2f2f2" stroke="#777" stroke-width="1.3"/><path d="M645.5 112l9 -9v30l-9 9z" fill="#cfcfcf" stroke="#777" stroke-width="1.3"/>
<path d="M620 117h21v21h-21z" fill="#f6f6f6" stroke="#ccc" stroke-width="0.8"/><path d="M620 117h7v13h14v8h-21z" fill="#5eaee8"/><path d="M620 117h7v13l-7 8z" fill="#3a8ad0"/>
<path d="M682 108.5h22v21h-22z" fill="#5eaee8" stroke="#5a86ad" stroke-width="1"/><path d="M682 108.5l4.5 -4.5h22l-4.5 4.5z" fill="#93d0f7" stroke="#5a86ad" stroke-width="1"/><path d="M704 108.5l4.5 -4.5v21l-4.5 4.5z" fill="#3a8ad0" stroke="#5a86ad" stroke-width="1"/>
<path d="M669.5 120h12v-3l4 -4v16.5h6v12.5h-22z" fill="#5eaee8" stroke="#4a86ba" stroke-width="0.8"/>
<path d="M669.5 120l4-3.5h8" fill="#93d0f7" stroke="#4a86ba" stroke-width="0.8"/><path d="M691.5 129.5v12.5l4-4v-8.5z" fill="#3a8ad0"/>
<path d="M725.5 109h27v13h-27z" fill="#5eaee8" stroke="#5a86ad" stroke-width="1"/><path d="M725.5 109l7 -7h27l-7 7z" fill="#93d0f7" stroke="#5a86ad" stroke-width="1"/><path d="M752.5 109l7 -7v13l-7 7z" fill="#3a8ad0" stroke="#5a86ad" stroke-width="1"/>
<path d="M722 126h32l8-7" fill="none" stroke="#5eaee8" stroke-width="2"/>
<path d="M725.5 129h27v12.5h-27z" fill="#dcdcdc" stroke="#777" stroke-width="1.2"/><path d="M752.5 141.5l7-6v-9" fill="#cfcfcf" stroke="#777" stroke-width="1.2"/>
<path d="M796.3 107v31M781 122.6h31" stroke="#222" stroke-width="2"/>
<path d="M796.3 103.5l-5.5 8h11z M796.3 141.8l-5.5-8h11z M776.8 122.6l8-5.5v11z M815.8 122.6l-8-5.5v11z" fill="#222"/>
<path d="M844.5 113.5h14.5v14h-14.5z" fill="#5eaee8" stroke="#5a86ad" stroke-width="1"/><path d="M844.5 113.5l5 -5h14.5l-5 5z" fill="#93d0f7" stroke="#5a86ad" stroke-width="1"/><path d="M859.0 113.5l5 -5v14l-5 5z" fill="#3a8ad0" stroke="#5a86ad" stroke-width="1"/>
<path d="M844.5 127.5h14.5v14.5h-14.5z" fill="#dcdcdc" stroke="#777" stroke-width="1.2"/><path d="M859 127.5h15v14.5h-15z" fill="#dcdcdc" stroke="#777" stroke-width="1.2"/><path d="M874 127.5l4.5-4v14.5l-4.5 4z" fill="#c8c8c8" stroke="#777" stroke-width="1.2"/>
<path d="M872.7 104l2 5l5-2l-2 5l5 2l-5 2l2 5l-5-2l-2 5l-2-5l-5 2l2-5l-5-2l5-2l-2-5l5 2z" fill="#f3a712" stroke="#e28a00" stroke-width="0.6"/>
<path d="M901 138V112l7-6.5h6.5v16l-5 4v11.5z" fill="#dedede" stroke="#666" stroke-width="1.2"/><path d="M926 137v-19l7 4.5v17z" fill="#dedede" stroke="#666" stroke-width="1.2"/><path d="M919 128v-9l7 -2v20l-7-1z" fill="#cfcfcf" stroke="#666" stroke-width="1.1"/><path d="M912 120v10M923 113v10" stroke="#5eaee8" stroke-width="1.3"/>
<path d="M994.5 141V113.5l10-10.5h11v27.5l-10 10.5z" fill="#e4e4e4" stroke="#777" stroke-width="1.2"/><path d="M1005 141V113.5l10.5-10.5v27.5z" fill="#56c46a" stroke="#3a9a4a" stroke-width="1"/>
<path d="M1020 140V114l10.5-10v26z" fill="#f0965a" stroke="#d07a40" stroke-width="0.8"/>
<rect x="1106" y="125" width="35" height="7" fill="#f5b400"/><path d="M1109 125v3M1113 125v2M1117 125v3M1121 125v2M1125 125v3M1129 125v2M1133 125v3M1137 125v2" stroke="#5a4a00" stroke-width="1"/>
<path d="M1107 112.5v11M1140.5 112.5v11M1108 118.2h31.5" stroke="#444" stroke-width="1.3"/><path d="M1108 118.2l4.5-3v6z M1139.5 118.2l-4.5-3v6z" fill="#444"/>
<rect x="1198" y="104" width="35.5" height="36" fill="#7ec6f7" stroke="#4a9ad6" stroke-width="1"/><circle cx="1224" cy="114" r="3.8" fill="#fffbe0"/>
<path d="M1198.5 127c3-4 6-6 8-6c4 0 7 8 12 12c3-3 5-5 7-5c3 0 5 4 8 7v5.5h-35z" fill="#3d8fd0"/>
<rect x="1282.5" y="99" width="47.5" height="47" fill="#1190dc"/><circle cx="1304" cy="121" r="14" fill="none" stroke="#5cc0a0" stroke-width="1" stroke-dasharray="2 2" opacity="0.6"/>
<path d="M1313 122v17l4-4l3 6l2.5-1l-3-6h5.5z" fill="#fff" stroke="#222" stroke-width="1"/><defs><linearGradient id="bodyg" x1="0" y1="0" x2="0" y2="1"><stop offset="0" stop-color="#fbfbfb"/><stop offset="1" stop-color="#e2e2e2"/></linearGradient><linearGradient id="tri" x1="0" y1="0" x2="1" y2="1"><stop offset="0" stop-color="#eee"/><stop offset="1" stop-color="#777"/></linearGradient></defs>
<path d="M11 192l6-4v8z M17 192l6-4v8z" fill="#444"/>
<circle cx="359.5" cy="191" r="6" fill="#222"/><path d="M356 191h7" stroke="#eee" stroke-width="1.6"/>
<path d="M373.5 185v12M376 187v8" stroke="#777" stroke-width="0.9"/>
<circle cx="359.5" cy="946.5" r="6" fill="#222"/><path d="M356 946.5h7M359.5 943v7" stroke="#eee" stroke-width="1.6"/>
<path d="M373.5 940v12M376 942v8" stroke="#777" stroke-width="0.9"/>
<path d="M51 218.5l10.5 7.7l-10.5 7.8z" fill="#f4f4f4" stroke="#444" stroke-width="2" stroke-linejoin="round"/>
<path d="M51 248.5l10.5 7.7l-10.5 7.8z" fill="#f4f4f4" stroke="#444" stroke-width="2" stroke-linejoin="round"/>
<path d="M49.5 291.5l12-12v12z" fill="url(#tri)" stroke="#333" stroke-width="1.5" stroke-linejoin="round"/>
<path d="M76.5 218h9v2h11v14h-20z" fill="#9c9c9c"/><path d="M76.5 220.5h20" stroke="#e6e6e6" stroke-width="0.8"/>
<path d="M77.3 256C81.5 249.5 91.5 249.5 95.7 256C91.5 262.5 81.5 262.5 77.3 256z" fill="none" stroke="#a3a3a3" stroke-width="1.3"/><path d="M80.5 249l12 14M83.0 251l10 11" stroke="#a3a3a3" stroke-width="1.1"/><path d="M81.5 250l11 13" stroke="#ececec" stroke-width="0.9"/>
<path d="M107.5 248h9v2h11v14h-20z" fill="#9c9c9c"/><path d="M107.5 250.5h20" stroke="#e6e6e6" stroke-width="0.8"/>
<path d="M76.5 286C81.5 279 91.5 279 96.5 286C91.5 293 81.5 293 76.5 286z" fill="#9a9a9a"/><circle cx="86.5" cy="286" r="4" fill="#dcdcdc"/><circle cx="86.5" cy="286" r="2.6" fill="#8a8a8a"/>
<path d="M107.5 278h9v2h11v14h-20z" fill="#9c9c9c"/><path d="M107.5 280.5h20" stroke="#e6e6e6" stroke-width="0.8"/>
<path d="M98.5 316C103.5 309 113.5 309 118.5 316C113.5 323 103.5 323 98.5 316z" fill="#9a9a9a"/><circle cx="108.5" cy="316" r="4" fill="#dcdcdc"/><circle cx="108.5" cy="316" r="2.6" fill="#8a8a8a"/>
<rect x="130.8" y="306.8" width="18.5" height="18.5" rx="5" ry="4.5" fill="url(#bodyg)" stroke="#555" stroke-width="1.6"/><rect x="136" y="314" width="8" height="8" fill="#c8c8c8" opacity="0.8"/>
<path d="M99.3 346C103.5 339.5 113.5 339.5 117.7 346C113.5 352.5 103.5 352.5 99.3 346z" fill="none" stroke="#a3a3a3" stroke-width="1.3"/><path d="M102.5 339l12 14M105.0 341l10 11" stroke="#a3a3a3" stroke-width="1.1"/><path d="M103.5 340l11 13" stroke="#ececec" stroke-width="0.9"/>
<rect x="130.8" y="336.8" width="18.5" height="18.5" rx="5" ry="4.5" fill="url(#bodyg)" stroke="#555" stroke-width="1.6"/><rect x="136" y="344" width="8" height="8" fill="#c8c8c8" opacity="0.8"/>
<path d="M98.5 376C103.5 369 113.5 369 118.5 376C113.5 383 103.5 383 98.5 376z" fill="#9a9a9a"/><circle cx="108.5" cy="376" r="4" fill="#dcdcdc"/><circle cx="108.5" cy="376" r="2.6" fill="#8a8a8a"/>
<rect x="130.8" y="366.8" width="18.5" height="18.5" rx="5" ry="4.5" fill="url(#bodyg)" stroke="#555" stroke-width="1.6"/><rect x="136" y="374" width="8" height="8" fill="#c8c8c8" opacity="0.8"/>
<path d="M98.5 406C103.5 399 113.5 399 118.5 406C113.5 413 103.5 413 98.5 406z" fill="#9a9a9a"/><circle cx="108.5" cy="406" r="4" fill="#dcdcdc"/><circle cx="108.5" cy="406" r="2.6" fill="#8a8a8a"/>
<rect x="130.8" y="396.8" width="18.5" height="18.5" rx="5" ry="4.5" fill="url(#bodyg)" stroke="#555" stroke-width="1.6"/><rect x="136" y="404" width="8" height="8" fill="#c8c8c8" opacity="0.8"/>
<path d="M99.3 436C103.5 429.5 113.5 429.5 117.7 436C113.5 442.5 103.5 442.5 99.3 436z" fill="none" stroke="#a3a3a3" stroke-width="1.3"/><path d="M102.5 429l12 14M105.0 431l10 11" stroke="#a3a3a3" stroke-width="1.1"/><path d="M103.5 430l11 13" stroke="#ececec" stroke-width="0.9"/>
<rect x="130.8" y="426.8" width="18.5" height="18.5" rx="5" ry="4.5" fill="url(#bodyg)" stroke="#555" stroke-width="1.6"/><rect x="136" y="434" width="8" height="8" fill="#c8c8c8" opacity="0.8"/>
<path d="M98.5 466C103.5 459 113.5 459 118.5 466C113.5 473 103.5 473 98.5 466z" fill="#9a9a9a"/><circle cx="108.5" cy="466" r="4" fill="#dcdcdc"/><circle cx="108.5" cy="466" r="2.6" fill="#8a8a8a"/>
<rect x="130.8" y="456.8" width="18.5" height="18.5" rx="5" ry="4.5" fill="url(#bodyg)" stroke="#555" stroke-width="1.6"/><rect x="136" y="464" width="8" height="8" fill="#c8c8c8" opacity="0.8"/>
<path d="M98.5 496C103.5 489 113.5 489 118.5 496C113.5 503 103.5 503 98.5 496z" fill="#9a9a9a"/><circle cx="108.5" cy="496" r="4" fill="#dcdcdc"/><circle cx="108.5" cy="496" r="2.6" fill="#8a8a8a"/>
<rect x="130.8" y="486.8" width="18.5" height="18.5" rx="5" ry="4.5" fill="url(#bodyg)" stroke="#555" stroke-width="1.6"/><rect x="136" y="494" width="8" height="8" fill="#c8c8c8" opacity="0.8"/>
<path d="M98.5 526C103.5 519 113.5 519 118.5 526C113.5 533 103.5 533 98.5 526z" fill="#9a9a9a"/><circle cx="108.5" cy="526" r="4" fill="#dcdcdc"/><circle cx="108.5" cy="526" r="2.6" fill="#8a8a8a"/>
<rect x="130.8" y="516.8" width="18.5" height="18.5" rx="5" ry="4.5" fill="url(#bodyg)" stroke="#555" stroke-width="1.6"/><rect x="136" y="524" width="8" height="8" fill="#c8c8c8" opacity="0.8"/>
<path d="M98.5 556C103.5 549 113.5 549 118.5 556C113.5 563 103.5 563 98.5 556z" fill="#9a9a9a"/><circle cx="108.5" cy="556" r="4" fill="#dcdcdc"/><circle cx="108.5" cy="556" r="2.6" fill="#8a8a8a"/>
<rect x="130.8" y="546.8" width="18.5" height="18.5" rx="5" ry="4.5" fill="url(#bodyg)" stroke="#555" stroke-width="1.6"/><rect x="136" y="554" width="8" height="8" fill="#c8c8c8" opacity="0.8"/>
<path d="M98.5 586C103.5 579 113.5 579 118.5 586C113.5 593 103.5 593 98.5 586z" fill="#9a9a9a"/><circle cx="108.5" cy="586" r="4" fill="#dcdcdc"/><circle cx="108.5" cy="586" r="2.6" fill="#8a8a8a"/>
<rect x="130.8" y="576.8" width="18.5" height="18.5" rx="5" ry="4.5" fill="url(#bodyg)" stroke="#555" stroke-width="1.6"/><rect x="136" y="584" width="8" height="8" fill="#c8c8c8" opacity="0.8"/>
<path d="M99.3 616C103.5 609.5 113.5 609.5 117.7 616C113.5 622.5 103.5 622.5 99.3 616z" fill="none" stroke="#a3a3a3" stroke-width="1.3"/><path d="M102.5 609l12 14M105.0 611l10 11" stroke="#a3a3a3" stroke-width="1.1"/><path d="M103.5 610l11 13" stroke="#ececec" stroke-width="0.9"/>
<rect x="130.8" y="606.8" width="18.5" height="18.5" rx="5" ry="4.5" fill="url(#bodyg)" stroke="#555" stroke-width="1.6"/><rect x="136" y="614" width="8" height="8" fill="#c8c8c8" opacity="0.8"/>
<path d="M99.3 646C103.5 639.5 113.5 639.5 117.7 646C113.5 652.5 103.5 652.5 99.3 646z" fill="none" stroke="#a3a3a3" stroke-width="1.3"/><path d="M102.5 639l12 14M105.0 641l10 11" stroke="#a3a3a3" stroke-width="1.1"/><path d="M103.5 640l11 13" stroke="#ececec" stroke-width="0.9"/>
<rect x="130.8" y="636.8" width="18.5" height="18.5" rx="5" ry="4.5" fill="url(#bodyg)" stroke="#555" stroke-width="1.6"/><rect x="136" y="644" width="8" height="8" fill="#c8c8c8" opacity="0.8"/>
<path d="M99.3 676C103.5 669.5 113.5 669.5 117.7 676C113.5 682.5 103.5 682.5 99.3 676z" fill="none" stroke="#a3a3a3" stroke-width="1.3"/><path d="M102.5 669l12 14M105.0 671l10 11" stroke="#a3a3a3" stroke-width="1.1"/><path d="M103.5 670l11 13" stroke="#ececec" stroke-width="0.9"/>
<rect x="130.8" y="666.8" width="18.5" height="18.5" rx="5" ry="4.5" fill="url(#bodyg)" stroke="#555" stroke-width="1.6"/><rect x="136" y="674" width="8" height="8" fill="#c8c8c8" opacity="0.8"/>
<path d="M99.3 706C103.5 699.5 113.5 699.5 117.7 706C113.5 712.5 103.5 712.5 99.3 706z" fill="none" stroke="#a3a3a3" stroke-width="1.3"/><path d="M102.5 699l12 14M105.0 701l10 11" stroke="#a3a3a3" stroke-width="1.1"/><path d="M103.5 700l11 13" stroke="#ececec" stroke-width="0.9"/>
<rect x="130.8" y="696.8" width="18.5" height="18.5" rx="5" ry="4.5" fill="url(#bodyg)" stroke="#555" stroke-width="1.6"/><rect x="136" y="704" width="8" height="8" fill="#c8c8c8" opacity="0.8"/>
<path d="M99.3 736C103.5 729.5 113.5 729.5 117.7 736C113.5 742.5 103.5 742.5 99.3 736z" fill="none" stroke="#a3a3a3" stroke-width="1.3"/><path d="M102.5 729l12 14M105.0 731l10 11" stroke="#a3a3a3" stroke-width="1.1"/><path d="M103.5 730l11 13" stroke="#ececec" stroke-width="0.9"/>
<rect x="130.8" y="726.8" width="18.5" height="18.5" rx="5" ry="4.5" fill="url(#bodyg)" stroke="#555" stroke-width="1.6"/><rect x="136" y="734" width="8" height="8" fill="#c8c8c8" opacity="0.8"/>
<path d="M99.3 766C103.5 759.5 113.5 759.5 117.7 766C113.5 772.5 103.5 772.5 99.3 766z" fill="none" stroke="#a3a3a3" stroke-width="1.3"/><path d="M102.5 759l12 14M105.0 761l10 11" stroke="#a3a3a3" stroke-width="1.1"/><path d="M103.5 760l11 13" stroke="#ececec" stroke-width="0.9"/>
<rect x="130.8" y="756.8" width="18.5" height="18.5" rx="5" ry="4.5" fill="url(#bodyg)" stroke="#555" stroke-width="1.6"/><rect x="136" y="764" width="8" height="8" fill="#c8c8c8" opacity="0.8"/>
<path d="M99.3 796C103.5 789.5 113.5 789.5 117.7 796C113.5 802.5 103.5 802.5 99.3 796z" fill="none" stroke="#a3a3a3" stroke-width="1.3"/><path d="M102.5 789l12 14M105.0 791l10 11" stroke="#a3a3a3" stroke-width="1.1"/><path d="M103.5 790l11 13" stroke="#ececec" stroke-width="0.9"/>
<rect x="130.8" y="786.8" width="18.5" height="18.5" rx="5" ry="4.5" fill="url(#bodyg)" stroke="#555" stroke-width="1.6"/><rect x="136" y="794" width="8" height="8" fill="#c8c8c8" opacity="0.8"/>
<path d="M99.3 826C103.5 819.5 113.5 819.5 117.7 826C113.5 832.5 103.5 832.5 99.3 826z" fill="none" stroke="#a3a3a3" stroke-width="1.3"/><path d="M102.5 819l12 14M105.0 821l10 11" stroke="#a3a3a3" stroke-width="1.1"/><path d="M103.5 820l11 13" stroke="#ececec" stroke-width="0.9"/>
<rect x="130.8" y="816.8" width="18.5" height="18.5" rx="5" ry="4.5" fill="url(#bodyg)" stroke="#555" stroke-width="1.6"/><rect x="136" y="824" width="8" height="8" fill="#c8c8c8" opacity="0.8"/>
<path d="M99.3 856C103.5 849.5 113.5 849.5 117.7 856C113.5 862.5 103.5 862.5 99.3 856z" fill="none" stroke="#a3a3a3" stroke-width="1.3"/><path d="M102.5 849l12 14M105.0 851l10 11" stroke="#a3a3a3" stroke-width="1.1"/><path d="M103.5 850l11 13" stroke="#ececec" stroke-width="0.9"/>
<rect x="130.8" y="846.8" width="18.5" height="18.5" rx="5" ry="4.5" fill="url(#bodyg)" stroke="#555" stroke-width="1.6"/><rect x="136" y="854" width="8" height="8" fill="#c8c8c8" opacity="0.8"/>
<path d="M99.3 886C103.5 879.5 113.5 879.5 117.7 886C113.5 892.5 103.5 892.5 99.3 886z" fill="none" stroke="#a3a3a3" stroke-width="1.3"/><path d="M102.5 879l12 14M105.0 881l10 11" stroke="#a3a3a3" stroke-width="1.1"/><path d="M103.5 880l11 13" stroke="#ececec" stroke-width="0.9"/>
<rect x="130.8" y="876.8" width="18.5" height="18.5" rx="5" ry="4.5" fill="url(#bodyg)" stroke="#555" stroke-width="1.6"/><rect x="136" y="884" width="8" height="8" fill="#c8c8c8" opacity="0.8"/>
<path d="M126 475c6 2 12-2 18 0c6 2 10-2 16 0c6 2 10-2 16 0c6 2 10-2 16 0c6 2 10-2 22 -2" fill="none" stroke="#4a5a9a" stroke-width="1.6" stroke-dasharray="3 2" opacity="0.8"/>
<rect x="811.5" y="933.5" width="295" height="29" fill="#ececec" opacity="0.92"/>
<ellipse cx="825" cy="948" rx="10" ry="4.5" fill="none" stroke="#555" stroke-width="1.3"/><path d="M821 939c-3 3-3 15 0 18M828 939c3 3 3 15 0 18" fill="none" stroke="#555" stroke-width="1.3"/><circle cx="823" cy="947" r="1.6" fill="#3a8ad0"/><circle cx="829" cy="944" r="1" fill="#3a8ad0"/>
<path d="M841.5 946h7l-3.5 4.5z" fill="#222"/>
<rect x="856.5" y="944" width="18.5" height="13" fill="#e8e8e8" stroke="#555" stroke-width="1.5"/><rect x="860.5" y="948" width="10.5" height="5" fill="#999"/><path d="M857 943l3-4l15-3" fill="none" stroke="#555" stroke-width="1.5"/>
<path d="M892 957c-3-3-5-7-4-9c1-1 3 0 4 2v-9c0-1.5 2.5-1.5 2.5 0v6v-8c0-1.5 2.5-1.5 2.5 0v8v-7c0-1.5 2.5-1.5 2.5 0v7v-5c0-1.5 2.5-1.5 2.5 0v9c0 3-1 5-2 6z" fill="#f4f4f4" stroke="#555" stroke-width="1.3"/>
<circle cx="927.5" cy="946.5" r="5.5" fill="#e6f0ec" stroke="#444" stroke-width="1.6"/><path d="M931.5 950.5l5 5" stroke="#333" stroke-width="2.8"/><path d="M934 940.5h6M937 937.5v6M934 945.5h6" stroke="#444" stroke-width="1.2"/>
<rect x="953" y="938.5" width="20" height="19" fill="none" stroke="#444" stroke-width="1" stroke-dasharray="2 2"/><circle cx="961" cy="946.5" r="6.5" fill="#e6f0ec" stroke="#444" stroke-width="1.6"/><path d="M965.5 951l5 5" stroke="#333" stroke-width="2.8"/>
<path d="M979.5 946h7l-3.5 4.5z" fill="#222"/>
<rect x="995.5" y="938.5" width="19" height="14" rx="1.5" fill="#7fa9d8" stroke="#555" stroke-width="1.6"/><rect x="998" y="941" width="14" height="9" fill="#a9c8ea"/><path d="M1001 955h8" stroke="#555" stroke-width="2"/>
<path d="M1020 946h7l-3.5 4.5z" fill="#222"/>
<rect x="1033.5" y="938.5" width="19" height="19" fill="#8a8a8a" stroke="#555" stroke-width="1.2"/><path d="M1036.5 938.5v19M1039.5 938.5v19M1042.5 938.5v19M1045.5 938.5v19M1048.5 938.5v19M1033.5 941.5h19M1033.5 944.5h19M1033.5 947.5h19M1033.5 950.5h19M1033.5 953.5h19" stroke="#e6e6e6" stroke-width="0.8"/>
<path d="M1059 946h7l-3.5 4.5z" fill="#222"/>
<rect x="1072.5" y="939.5" width="18.5" height="17" fill="#5a8ccc" stroke="#3a6aaa" stroke-width="1"/><path d="M1081.7 939.5v17M1072.5 948h18.5" stroke="#dde8f5" stroke-width="1.6"/>
<path d="M1097 946h7l-3.5 4.5z" fill="#222"/>
<path d="M1813 213l27-2l45 4l2 60l-47 2l-27-5z" fill="#e4e4e4" opacity="0.9"/><path d="M1840 211v66" stroke="#777" stroke-width="0.8" stroke-dasharray="2 1"/><path d="M1813 213l27-2l45 4l2 60l-47 2l-27-5z" fill="none" stroke="#777" stroke-width="0.8" stroke-dasharray="2 1"/>
<path d="M1815 196l-2 74" stroke="#8fd88f" stroke-width="2"/><path d="M1812 192l3 5l3-5" stroke="#8fd88f" stroke-width="1.2" fill="none"/>
<path d="M1813 270l35 12" stroke="#8888ee" stroke-width="2"/><path d="M1845 278h6l-6 6h6" stroke="#8888ee" stroke-width="1.2" fill="none"/>
<text x="1852" y="248" font-family="Liberation Sans" font-size="11" fill="#777" transform="rotate(4 1862 245)">TOP</text>
<text x="0" y="0" font-family="Liberation Sans" font-size="7" fill="#777" transform="translate(1822 236) rotate(92)">LEFT</text>
<path d="M14.5 996v18" stroke="#333" stroke-width="2.4"/><path d="M29 996v18l-13-9z" fill="#333"/>
<path d="M44 1005l12.5-9v18z" fill="#333"/><rect x="58" y="1001" width="2.6" height="8" fill="#333"/>
<path d="M76.5 995v20l14.5-10z" fill="#333"/>
<rect x="106" y="1001" width="2.6" height="8" fill="#333"/><path d="M109.5 996l12.5 9l-12.5 9z" fill="#333"/>
<path d="M153 996v18" stroke="#333" stroke-width="2.4"/><path d="M139 996v18l13-9z" fill="#333"/>
<path d="M177 1020h6M187 1020h4" stroke="#c9c9c9" stroke-width="2"/><path d="M193 1020H1843" stroke="#cdcdcd" stroke-width="2.2"/>
<path d="M192.5 1013v6" stroke="#c4c4c4" stroke-width="1.6"/>
<path d="M184 996l7-7h4c5 0 8 4 8 9v10h-17c-1.5 0-2-1-2-2z" fill="#e4e4e4" stroke="#666" stroke-width="1.1"/><path d="M185 997l8-8l4 4l-8 8z" fill="#5eaee8" stroke="#4a86ba" stroke-width="0.7"/>
<path d="M222.5 1013v6" stroke="#c4c4c4" stroke-width="1.6"/>
<path d="M215 1007h13l3-3v-2h-16z" fill="#d0d0d0"/><path d="M215 992h12v14h-12z" fill="#5eaee8" stroke="#4a86ba" stroke-width="0.8"/><path d="M215 992l3-3h12l-3 3z" fill="#93d0f7" stroke="#4a86ba" stroke-width="0.8"/><path d="M227 992l3-3v14l-3 3z" fill="#3a8ad0" stroke="#4a86ba" stroke-width="0.8"/><path d="M232.5 1007v-16" stroke="#222" stroke-width="1.3"/><path d="M230.5 993l2-4l2 4z" fill="#222"/>
<path d="M252.5 1013v6" stroke="#c4c4c4" stroke-width="1.6"/>
<path d="M245 1007h13l3-3v-2h-16z" fill="#d0d0d0"/><path d="M245 992h12v14h-12z" fill="#5eaee8" stroke="#4a86ba" stroke-width="0.8"/><path d="M245 992l3-3h12l-3 3z" fill="#93d0f7" stroke="#4a86ba" stroke-width="0.8"/><path d="M257 992l3-3v14l-3 3z" fill="#3a8ad0" stroke="#4a86ba" stroke-width="0.8"/><path d="M262.5 1007v-16" stroke="#222" stroke-width="1.3"/><path d="M260.5 993l2-4l2 4z" fill="#222"/>
<path d="M282.5 1013v6" stroke="#c4c4c4" stroke-width="1.6"/>
<path d="M275 1007h13l3-3v-2h-16z" fill="#d0d0d0"/><path d="M275 992h12v14h-12z" fill="#5eaee8" stroke="#4a86ba" stroke-width="0.8"/><path d="M275 992l3-3h12l-3 3z" fill="#93d0f7" stroke="#4a86ba" stroke-width="0.8"/><path d="M287 992l3-3v14l-3 3z" fill="#3a8ad0" stroke="#4a86ba" stroke-width="0.8"/><path d="M292.5 1007v-16" stroke="#222" stroke-width="1.3"/><path d="M290.5 993l2-4l2 4z" fill="#222"/>
<path d="M312.5 1013v6" stroke="#c4c4c4" stroke-width="1.6"/>
<path d="M305 1007h13l3-3v-2h-16z" fill="#d0d0d0"/><path d="M305 992h12v14h-12z" fill="#5eaee8" stroke="#4a86ba" stroke-width="0.8"/><path d="M305 992l3-3h12l-3 3z" fill="#93d0f7" stroke="#4a86ba" stroke-width="0.8"/><path d="M317 992l3-3v14l-3 3z" fill="#3a8ad0" stroke="#4a86ba" stroke-width="0.8"/><path d="M322.5 1007v-16" stroke="#222" stroke-width="1.3"/><path d="M320.5 993l2-4l2 4z" fill="#222"/>
<path d="M342.5 1013v6" stroke="#c4c4c4" stroke-width="1.6"/>
<rect x="334" y="989" width="8" height="8" rx="4" fill="#eee" stroke="#555" stroke-width="1.1"/><rect x="343" y="998" width="9" height="9" rx="4" fill="#eee" stroke="#555" stroke-width="1.1"/><path d="M337 998v5h5" fill="none" stroke="#3a8ad0" stroke-width="1.3"/>
<path d="M372.5 1013v6" stroke="#c4c4c4" stroke-width="1.6"/>
<path d="M373 991v15M365.5 998.5h15" stroke="#222" stroke-width="1.6"/><path d="M373 989l-3.5 4.5h7z M373 1008l-3.5-4.5h7z M363.5 998.5l4.5-3.5v7z M382.5 998.5l-4.5-3.5v7z" fill="#222"/>
<path d="M402.5 1013v6" stroke="#c4c4c4" stroke-width="1.6"/>
<path d="M395 990h15v15h-15z" fill="none" stroke="#555" stroke-width="0.9" stroke-dasharray="2 1.5"/>
<rect x="393.5" y="988.5" width="3" height="3" fill="#3a6aaa"/>
<rect x="408.5" y="988.5" width="3" height="3" fill="#3a6aaa"/>
<rect x="393.5" y="1003.5" width="3" height="3" fill="#3a6aaa"/>
<path d="M403 1007l9-9l2 2l-9 9h-2z" fill="#f5b04a"/><path d="M412 998l2 2l1.5-1.5l-2-2z" fill="#e04040"/>
<path d="M432.5 1013v6" stroke="#c4c4c4" stroke-width="1.6"/>
<path d="M425 990h15v15h-15z" fill="none" stroke="#555" stroke-width="0.9" stroke-dasharray="2 1.5"/>
<rect x="423.5" y="988.5" width="3" height="3" fill="#3a6aaa"/>
<rect x="438.5" y="988.5" width="3" height="3" fill="#3a6aaa"/>
<rect x="423.5" y="1003.5" width="3" height="3" fill="#3a6aaa"/>
<path d="M433 1007l9-9l2 2l-9 9h-2z" fill="#f5b04a"/><path d="M442 998l2 2l1.5-1.5l-2-2z" fill="#e04040"/>
<path d="M462.5 1013v6" stroke="#c4c4c4" stroke-width="1.6"/>
<path d="M455 1007h13l3-3v-2h-16z" fill="#d0d0d0"/><path d="M455 992h12v14h-12z" fill="#5eaee8" stroke="#4a86ba" stroke-width="0.8"/><path d="M455 992l3-3h12l-3 3z" fill="#93d0f7" stroke="#4a86ba" stroke-width="0.8"/><path d="M467 992l3-3v14l-3 3z" fill="#3a8ad0" stroke="#4a86ba" stroke-width="0.8"/><path d="M472.5 1007v-16" stroke="#222" stroke-width="1.3"/><path d="M470.5 993l2-4l2 4z" fill="#222"/>
<path d="M492.5 1013v6" stroke="#c4c4c4" stroke-width="1.6"/>
<path d="M485 1007h13l3-3v-2h-16z" fill="#d0d0d0"/><path d="M485 992h12v14h-12z" fill="#5eaee8" stroke="#4a86ba" stroke-width="0.8"/><path d="M485 992l3-3h12l-3 3z" fill="#93d0f7" stroke="#4a86ba" stroke-width="0.8"/><path d="M497 992l3-3v14l-3 3z" fill="#3a8ad0" stroke="#4a86ba" stroke-width="0.8"/><path d="M502.5 1007v-16" stroke="#222" stroke-width="1.3"/><path d="M500.5 993l2-4l2 4z" fill="#222"/>
<path d="M522.5 1013v6" stroke="#c4c4c4" stroke-width="1.6"/>
<path d="M515 1007h13l3-3v-2h-16z" fill="#d0d0d0"/><path d="M515 992h12v14h-12z" fill="#5eaee8" stroke="#4a86ba" stroke-width="0.8"/><path d="M515 992l3-3h12l-3 3z" fill="#93d0f7" stroke="#4a86ba" stroke-width="0.8"/><path d="M527 992l3-3v14l-3 3z" fill="#3a8ad0" stroke="#4a86ba" stroke-width="0.8"/><path d="M532.5 1007v-16" stroke="#222" stroke-width="1.3"/><path d="M530.5 993l2-4l2 4z" fill="#222"/>
<path d="M552.5 1013v6" stroke="#c4c4c4" stroke-width="1.6"/>
<path d="M553 991v15M545.5 998.5h15" stroke="#222" stroke-width="1.6"/><path d="M553 989l-3.5 4.5h7z M553 1008l-3.5-4.5h7z M543.5 998.5l4.5-3.5v7z M562.5 998.5l-4.5-3.5v7z" fill="#222"/>
<path d="M582.5 1013v6" stroke="#c4c4c4" stroke-width="1.6"/>
<path d="M575 1007h13l3-3v-2h-16z" fill="#d0d0d0"/><path d="M575 992h12v14h-12z" fill="#5eaee8" stroke="#4a86ba" stroke-width="0.8"/><path d="M575 992l3-3h12l-3 3z" fill="#93d0f7" stroke="#4a86ba" stroke-width="0.8"/><path d="M587 992l3-3v14l-3 3z" fill="#3a8ad0" stroke="#4a86ba" stroke-width="0.8"/><path d="M592.5 1007v-16" stroke="#222" stroke-width="1.3"/><path d="M590.5 993l2-4l2 4z" fill="#222"/>
<path d="M612.5 1013v6" stroke="#c4c4c4" stroke-width="1.6"/>
<path d="M605 990h15v15h-15z" fill="none" stroke="#555" stroke-width="0.9" stroke-dasharray="2 1.5"/>
<rect x="603.5" y="988.5" width="3" height="3" fill="#3a6aaa"/>
<rect x="618.5" y="988.5" width="3" height="3" fill="#3a6aaa"/>
<rect x="603.5" y="1003.5" width="3" height="3" fill="#3a6aaa"/>
<path d="M613 1007l9-9l2 2l-9 9h-2z" fill="#f5b04a"/><path d="M622 998l2 2l1.5-1.5l-2-2z" fill="#e04040"/>
<path d="M642.5 1013v6" stroke="#c4c4c4" stroke-width="1.6"/>
<path d="M635 1007h13l3-3v-2h-16z" fill="#d0d0d0"/><path d="M635 992h12v14h-12z" fill="#5eaee8" stroke="#4a86ba" stroke-width="0.8"/><path d="M635 992l3-3h12l-3 3z" fill="#93d0f7" stroke="#4a86ba" stroke-width="0.8"/><path d="M647 992l3-3v14l-3 3z" fill="#3a8ad0" stroke="#4a86ba" stroke-width="0.8"/><path d="M652.5 1007v-16" stroke="#222" stroke-width="1.3"/><path d="M650.5 993l2-4l2 4z" fill="#222"/>
<path d="M672.5 1013v6" stroke="#c4c4c4" stroke-width="1.6"/>
<path d="M665 1007h13l3-3v-2h-16z" fill="#d0d0d0"/><path d="M665 992h12v14h-12z" fill="#5eaee8" stroke="#4a86ba" stroke-width="0.8"/><path d="M665 992l3-3h12l-3 3z" fill="#93d0f7" stroke="#4a86ba" stroke-width="0.8"/><path d="M677 992l3-3v14l-3 3z" fill="#3a8ad0" stroke="#4a86ba" stroke-width="0.8"/><path d="M682.5 1007v-16" stroke="#222" stroke-width="1.3"/><path d="M680.5 993l2-4l2 4z" fill="#222"/>
<path d="M702.5 1013v6" stroke="#c4c4c4" stroke-width="1.6"/>
<path d="M695 1007h13l3-3v-2h-16z" fill="#d0d0d0"/><path d="M695 992h12v14h-12z" fill="#5eaee8" stroke="#4a86ba" stroke-width="0.8"/><path d="M695 992l3-3h12l-3 3z" fill="#93d0f7" stroke="#4a86ba" stroke-width="0.8"/><path d="M707 992l3-3v14l-3 3z" fill="#3a8ad0" stroke="#4a86ba" stroke-width="0.8"/><path d="M712.5 1007v-16" stroke="#222" stroke-width="1.3"/><path d="M710.5 993l2-4l2 4z" fill="#222"/>
<path d="M732.5 1013v6" stroke="#c4c4c4" stroke-width="1.6"/>
<path d="M725 990h15v15h-15z" fill="none" stroke="#555" stroke-width="0.9" stroke-dasharray="2 1.5"/>
<rect x="723.5" y="988.5" width="3" height="3" fill="#3a6aaa"/>
<rect x="738.5" y="988.5" width="3" height="3" fill="#3a6aaa"/>
<rect x="723.5" y="1003.5" width="3" height="3" fill="#3a6aaa"/>
<path d="M733 1007l9-9l2 2l-9 9h-2z" fill="#f5b04a"/><path d="M742 998l2 2l1.5-1.5l-2-2z" fill="#e04040"/>
<path d="M762.5 1013v6" stroke="#c4c4c4" stroke-width="1.6"/>
<path d="M755 1007h13l3-3v-2h-16z" fill="#d0d0d0"/><path d="M755 992h12v14h-12z" fill="#5eaee8" stroke="#4a86ba" stroke-width="0.8"/><path d="M755 992l3-3h12l-3 3z" fill="#93d0f7" stroke="#4a86ba" stroke-width="0.8"/><path d="M767 992l3-3v14l-3 3z" fill="#3a8ad0" stroke="#4a86ba" stroke-width="0.8"/><path d="M772.5 1007v-16" stroke="#222" stroke-width="1.3"/><path d="M770.5 993l2-4l2 4z" fill="#222"/>
<path d="M792.5 1013v6" stroke="#c4c4c4" stroke-width="1.6"/>
<path d="M785 1007h13l3-3v-2h-16z" fill="#d0d0d0"/><path d="M785 992h12v14h-12z" fill="#5eaee8" stroke="#4a86ba" stroke-width="0.8"/><path d="M785 992l3-3h12l-3 3z" fill="#93d0f7" stroke="#4a86ba" stroke-width="0.8"/><path d="M797 992l3-3v14l-3 3z" fill="#3a8ad0" stroke="#4a86ba" stroke-width="0.8"/><path d="M802.5 1007v-16" stroke="#222" stroke-width="1.3"/><path d="M800.5 993l2-4l2 4z" fill="#222"/>
<path d="M822.5 1013v6" stroke="#c4c4c4" stroke-width="1.6"/>
<path d="M815 1007h13l3-3v-2h-16z" fill="#d0d0d0"/><path d="M815 992h12v14h-12z" fill="#5eaee8" stroke="#4a86ba" stroke-width="0.8"/><path d="M815 992l3-3h12l-3 3z" fill="#93d0f7" stroke="#4a86ba" stroke-width="0.8"/><path d="M827 992l3-3v14l-3 3z" fill="#3a8ad0" stroke="#4a86ba" stroke-width="0.8"/><path d="M832.5 1007v-16" stroke="#222" stroke-width="1.3"/><path d="M830.5 993l2-4l2 4z" fill="#222"/>
<path d="M852.5 1013v6" stroke="#c4c4c4" stroke-width="1.6"/>
<path d="M845 1007h13l3-3v-2h-16z" fill="#d0d0d0"/><path d="M845 992h12v14h-12z" fill="#5eaee8" stroke="#4a86ba" stroke-width="0.8"/><path d="M845 992l3-3h12l-3 3z" fill="#93d0f7" stroke="#4a86ba" stroke-width="0.8"/><path d="M857 992l3-3v14l-3 3z" fill="#3a8ad0" stroke="#4a86ba" stroke-width="0.8"/><path d="M862.5 1007v-16" stroke="#222" stroke-width="1.3"/><path d="M860.5 993l2-4l2 4z" fill="#222"/>
<path d="M882.5 1013v6" stroke="#c4c4c4" stroke-width="1.6"/>
<path d="M875 1007h13l3-3v-2h-16z" fill="#d0d0d0"/><path d="M875 992h12v14h-12z" fill="#5eaee8" stroke="#4a86ba" stroke-width="0.8"/><path d="M875 992l3-3h12l-3 3z" fill="#93d0f7" stroke="#4a86ba" stroke-width="0.8"/><path d="M887 992l3-3v14l-3 3z" fill="#3a8ad0" stroke="#4a86ba" stroke-width="0.8"/><path d="M892.5 1007v-16" stroke="#222" stroke-width="1.3"/><path d="M890.5 993l2-4l2 4z" fill="#222"/>
<path d="M912.5 1013v6" stroke="#c4c4c4" stroke-width="1.6"/>
<path d="M905 990h15v15h-15z" fill="none" stroke="#555" stroke-width="0.9" stroke-dasharray="2 1.5"/>
<rect x="903.5" y="988.5" width="3" height="3" fill="#3a6aaa"/>
<rect x="918.5" y="988.5" width="3" height="3" fill="#3a6aaa"/>
<rect x="903.5" y="1003.5" width="3" height="3" fill="#3a6aaa"/>
<path d="M913 1007l9-9l2 2l-9 9h-2z" fill="#f5b04a"/><path d="M922 998l2 2l1.5-1.5l-2-2z" fill="#e04040"/>
<path d="M942.5 1013v6" stroke="#c4c4c4" stroke-width="1.6"/>
<path d="M935 1007h13l3-3v-2h-16z" fill="#d0d0d0"/><path d="M935 992h12v14h-12z" fill="#5eaee8" stroke="#4a86ba" stroke-width="0.8"/><path d="M935 992l3-3h12l-3 3z" fill="#93d0f7" stroke="#4a86ba" stroke-width="0.8"/><path d="M947 992l3-3v14l-3 3z" fill="#3a8ad0" stroke="#4a86ba" stroke-width="0.8"/><path d="M952.5 1007v-16" stroke="#222" stroke-width="1.3"/><path d="M950.5 993l2-4l2 4z" fill="#222"/>
<path d="M972.5 1013v6" stroke="#c4c4c4" stroke-width="1.6"/>
<path d="M965 1007h13l3-3v-2h-16z" fill="#d0d0d0"/><path d="M965 992h12v14h-12z" fill="#5eaee8" stroke="#4a86ba" stroke-width="0.8"/><path d="M965 992l3-3h12l-3 3z" fill="#93d0f7" stroke="#4a86ba" stroke-width="0.8"/><path d="M977 992l3-3v14l-3 3z" fill="#3a8ad0" stroke="#4a86ba" stroke-width="0.8"/><path d="M982.5 1007v-16" stroke="#222" stroke-width="1.3"/><path d="M980.5 993l2-4l2 4z" fill="#222"/>
<path d="M1002.5 1013v6" stroke="#c4c4c4" stroke-width="1.6"/>
<path d="M1003 991v15M995.5 998.5h15" stroke="#222" stroke-width="1.6"/><path d="M1003 989l-3.5 4.5h7z M1003 1008l-3.5-4.5h7z M993.5 998.5l4.5-3.5v7z M1012.5 998.5l-4.5-3.5v7z" fill="#222"/>
<path d="M1032.5 1013v6" stroke="#c4c4c4" stroke-width="1.6"/>
<path d="M1033 991v15M1025.5 998.5h15" stroke="#222" stroke-width="1.6"/><path d="M1033 989l-3.5 4.5h7z M1033 1008l-3.5-4.5h7z M1023.5 998.5l4.5-3.5v7z M1042.5 998.5l-4.5-3.5v7z" fill="#222"/>
<path d="M1062.5 1013v6" stroke="#c4c4c4" stroke-width="1.6"/>
<path d="M1055 990h15v15h-15z" fill="none" stroke="#555" stroke-width="0.9" stroke-dasharray="2 1.5"/>
<rect x="1053.5" y="988.5" width="3" height="3" fill="#3a6aaa"/>
<rect x="1068.5" y="988.5" width="3" height="3" fill="#3a6aaa"/>
<rect x="1053.5" y="1003.5" width="3" height="3" fill="#3a6aaa"/>
<path d="M1063 1007l9-9l2 2l-9 9h-2z" fill="#f5b04a"/><path d="M1072 998l2 2l1.5-1.5l-2-2z" fill="#e04040"/>
<path d="M1092.5 1013v6" stroke="#c4c4c4" stroke-width="1.6"/>
<path d="M1085 1007h13l3-3v-2h-16z" fill="#d0d0d0"/><path d="M1085 992h12v14h-12z" fill="#5eaee8" stroke="#4a86ba" stroke-width="0.8"/><path d="M1085 992l3-3h12l-3 3z" fill="#93d0f7" stroke="#4a86ba" stroke-width="0.8"/><path d="M1097 992l3-3v14l-3 3z" fill="#3a8ad0" stroke="#4a86ba" stroke-width="0.8"/><path d="M1102.5 1007v-16" stroke="#222" stroke-width="1.3"/><path d="M1100.5 993l2-4l2 4z" fill="#222"/>
<path d="M1122.5 1013v6" stroke="#c4c4c4" stroke-width="1.6"/>
<path d="M1115 990h15v15h-15z" fill="none" stroke="#555" stroke-width="0.9" stroke-dasharray="2 1.5"/>
<rect x="1113.5" y="988.5" width="3" height="3" fill="#3a6aaa"/>
<rect x="1128.5" y="988.5" width="3" height="3" fill="#3a6aaa"/>
<rect x="1113.5" y="1003.5" width="3" height="3" fill="#3a6aaa"/>
<path d="M1123 1007l9-9l2 2l-9 9h-2z" fill="#f5b04a"/><path d="M1132 998l2 2l1.5-1.5l-2-2z" fill="#e04040"/>
<path d="M1152.5 1013v6" stroke="#c4c4c4" stroke-width="1.6"/>
<path d="M1145 1007h13l3-3v-2h-16z" fill="#d0d0d0"/><path d="M1145 992h12v14h-12z" fill="#5eaee8" stroke="#4a86ba" stroke-width="0.8"/><path d="M1145 992l3-3h12l-3 3z" fill="#93d0f7" stroke="#4a86ba" stroke-width="0.8"/><path d="M1157 992l3-3v14l-3 3z" fill="#3a8ad0" stroke="#4a86ba" stroke-width="0.8"/><path d="M1162.5 1007v-16" stroke="#222" stroke-width="1.3"/><path d="M1160.5 993l2-4l2 4z" fill="#222"/>
<path d="M1182.5 1013v6" stroke="#c4c4c4" stroke-width="1.6"/>
<path d="M1175 990h15v15h-15z" fill="none" stroke="#555" stroke-width="0.9" stroke-dasharray="2 1.5"/>
<rect x="1173.5" y="988.5" width="3" height="3" fill="#3a6aaa"/>
<rect x="1188.5" y="988.5" width="3" height="3" fill="#3a6aaa"/>
<rect x="1173.5" y="1003.5" width="3" height="3" fill="#3a6aaa"/>
<path d="M1183 1007l9-9l2 2l-9 9h-2z" fill="#f5b04a"/><path d="M1192 998l2 2l1.5-1.5l-2-2z" fill="#e04040"/>
<path d="M1212.5 1013v6" stroke="#c4c4c4" stroke-width="1.6"/>
<path d="M1205 1007h13l3-3v-2h-16z" fill="#d0d0d0"/><path d="M1205 992h12v14h-12z" fill="#5eaee8" stroke="#4a86ba" stroke-width="0.8"/><path d="M1205 992l3-3h12l-3 3z" fill="#93d0f7" stroke="#4a86ba" stroke-width="0.8"/><path d="M1217 992l3-3v14l-3 3z" fill="#3a8ad0" stroke="#4a86ba" stroke-width="0.8"/><path d="M1222.5 1007v-16" stroke="#222" stroke-width="1.3"/><path d="M1220.5 993l2-4l2 4z" fill="#222"/>
<path d="M1242.5 1013v6" stroke="#c4c4c4" stroke-width="1.6"/>
<path d="M1243 991v15M1235.5 998.5h15" stroke="#222" stroke-width="1.6"/><path d="M1243 989l-3.5 4.5h7z M1243 1008l-3.5-4.5h7z M1233.5 998.5l4.5-3.5v7z M1252.5 998.5l-4.5-3.5v7z" fill="#222"/>
<path d="M1272.5 1013v6" stroke="#c4c4c4" stroke-width="1.6"/>
<path d="M1265 990h15v15h-15z" fill="none" stroke="#555" stroke-width="0.9" stroke-dasharray="2 1.5"/>
<rect x="1263.5" y="988.5" width="3" height="3" fill="#3a6aaa"/>
<rect x="1278.5" y="988.5" width="3" height="3" fill="#3a6aaa"/>
<rect x="1263.5" y="1003.5" width="3" height="3" fill="#3a6aaa"/>
<path d="M1273 1007l9-9l2 2l-9 9h-2z" fill="#f5b04a"/><path d="M1282 998l2 2l1.5-1.5l-2-2z" fill="#e04040"/>
<path d="M1302.5 1013v6" stroke="#c4c4c4" stroke-width="1.6"/>
<path d="M1295 1007h13l3-3v-2h-16z" fill="#d0d0d0"/><path d="M1295 992h12v14h-12z" fill="#5eaee8" stroke="#4a86ba" stroke-width="0.8"/><path d="M1295 992l3-3h12l-3 3z" fill="#93d0f7" stroke="#4a86ba" stroke-width="0.8"/><path d="M1307 992l3-3v14l-3 3z" fill="#3a8ad0" stroke="#4a86ba" stroke-width="0.8"/><path d="M1312.5 1007v-16" stroke="#222" stroke-width="1.3"/><path d="M1310.5 993l2-4l2 4z" fill="#222"/>
<path d="M1332.5 1013v6" stroke="#c4c4c4" stroke-width="1.6"/>
<path d="M1324 1007v-12l6-6h4c5 0 9 4 9 9v9z" fill="#dadada" stroke="#666" stroke-width="1.1"/><path d="M1332 989h2c5 0 9 4 9 9l-3 3c0-5-3-9-8-9z" fill="#5eaee8" stroke="#4a86ba" stroke-width="0.7"/>
<path d="M1362.5 1013v6" stroke="#c4c4c4" stroke-width="1.6"/>
<path d="M1355 1007h13l3-3v-2h-16z" fill="#d0d0d0"/><path d="M1355 992h12v14h-12z" fill="#5eaee8" stroke="#4a86ba" stroke-width="0.8"/><path d="M1355 992l3-3h12l-3 3z" fill="#93d0f7" stroke="#4a86ba" stroke-width="0.8"/><path d="M1367 992l3-3v14l-3 3z" fill="#3a8ad0" stroke="#4a86ba" stroke-width="0.8"/><path d="M1372.5 1007v-16" stroke="#222" stroke-width="1.3"/><path d="M1370.5 993l2-4l2 4z" fill="#222"/>
<path d="M1392.5 1013v6" stroke="#c4c4c4" stroke-width="1.6"/>
<path d="M1385 1007h13l3-3v-2h-16z" fill="#d0d0d0"/><path d="M1385 992h12v14h-12z" fill="#5eaee8" stroke="#4a86ba" stroke-width="0.8"/><path d="M1385 992l3-3h12l-3 3z" fill="#93d0f7" stroke="#4a86ba" stroke-width="0.8"/><path d="M1397 992l3-3v14l-3 3z" fill="#3a8ad0" stroke="#4a86ba" stroke-width="0.8"/><path d="M1402.5 1007v-16" stroke="#222" stroke-width="1.3"/><path d="M1400.5 993l2-4l2 4z" fill="#222"/>
<path d="M1422.5 1013v6" stroke="#c4c4c4" stroke-width="1.6"/>
<path d="M1415 990h15v15h-15z" fill="none" stroke="#555" stroke-width="0.9" stroke-dasharray="2 1.5"/>
<rect x="1413.5" y="988.5" width="3" height="3" fill="#3a6aaa"/>
<rect x="1428.5" y="988.5" width="3" height="3" fill="#3a6aaa"/>
<rect x="1413.5" y="1003.5" width="3" height="3" fill="#3a6aaa"/>
<path d="M1423 1007l9-9l2 2l-9 9h-2z" fill="#f5b04a"/><path d="M1432 998l2 2l1.5-1.5l-2-2z" fill="#e04040"/>
<path d="M1452.5 1013v6" stroke="#c4c4c4" stroke-width="1.6"/>
<path d="M1445 1007h13l3-3v-2h-16z" fill="#d0d0d0"/><path d="M1445 992h12v14h-12z" fill="#5eaee8" stroke="#4a86ba" stroke-width="0.8"/><path d="M1445 992l3-3h12l-3 3z" fill="#93d0f7" stroke="#4a86ba" stroke-width="0.8"/><path d="M1457 992l3-3v14l-3 3z" fill="#3a8ad0" stroke="#4a86ba" stroke-width="0.8"/><path d="M1462.5 1007v-16" stroke="#222" stroke-width="1.3"/><path d="M1460.5 993l2-4l2 4z" fill="#222"/>
<path d="M1482.5 1013v6" stroke="#c4c4c4" stroke-width="1.6"/>
<path d="M1474 1007v-12l6-6h4c5 0 9 4 9 9v9z" fill="#dadada" stroke="#666" stroke-width="1.1"/><path d="M1482 989h2c5 0 9 4 9 9l-3 3c0-5-3-9-8-9z" fill="#5eaee8" stroke="#4a86ba" stroke-width="0.7"/>
<path d="M1512.5 1013v6" stroke="#c4c4c4" stroke-width="1.6"/>
<path d="M1504 1007v-12l6-6h4c5 0 9 4 9 9v9z" fill="#dadada" stroke="#666" stroke-width="1.1"/><path d="M1512 989h2c5 0 9 4 9 9l-3 3c0-5-3-9-8-9z" fill="#5eaee8" stroke="#4a86ba" stroke-width="0.7"/>
<path d="M1542.5 1013v6" stroke="#c4c4c4" stroke-width="1.6"/>
<path d="M1534 1007v-12l6-6h4c5 0 9 4 9 9v9z" fill="#dadada" stroke="#666" stroke-width="1.1"/><path d="M1542 989h2c5 0 9 4 9 9l-3 3c0-5-3-9-8-9z" fill="#5eaee8" stroke="#4a86ba" stroke-width="0.7"/>
<path d="M1572.5 1013v6" stroke="#c4c4c4" stroke-width="1.6"/>
<path d="M1564 1007v-12l6-6h4c5 0 9 4 9 9v9z" fill="#dadada" stroke="#666" stroke-width="1.1"/><path d="M1572 989h2c5 0 9 4 9 9l-3 3c0-5-3-9-8-9z" fill="#5eaee8" stroke="#4a86ba" stroke-width="0.7"/>
<path d="M1602.5 1013v6" stroke="#c4c4c4" stroke-width="1.6"/>
<path d="M1594 1007v-12l6-6h4c5 0 9 4 9 9v9z" fill="#dadada" stroke="#666" stroke-width="1.1"/><path d="M1602 989h2c5 0 9 4 9 9l-3 3c0-5-3-9-8-9z" fill="#5eaee8" stroke="#4a86ba" stroke-width="0.7"/>
<path d="M1632.5 1013v6" stroke="#c4c4c4" stroke-width="1.6"/>
<path d="M1625 990h15v15h-15z" fill="none" stroke="#555" stroke-width="0.9" stroke-dasharray="2 1.5"/>
<rect x="1623.5" y="988.5" width="3" height="3" fill="#3a6aaa"/>
<rect x="1638.5" y="988.5" width="3" height="3" fill="#3a6aaa"/>
<rect x="1623.5" y="1003.5" width="3" height="3" fill="#3a6aaa"/>
<path d="M1633 1007l9-9l2 2l-9 9h-2z" fill="#f5b04a"/><path d="M1642 998l2 2l1.5-1.5l-2-2z" fill="#e04040"/>
<path d="M1662.5 1013v6" stroke="#c4c4c4" stroke-width="1.6"/>
<path d="M1655 1007h13l3-3v-2h-16z" fill="#d0d0d0"/><path d="M1655 992h12v14h-12z" fill="#5eaee8" stroke="#4a86ba" stroke-width="0.8"/><path d="M1655 992l3-3h12l-3 3z" fill="#93d0f7" stroke="#4a86ba" stroke-width="0.8"/><path d="M1667 992l3-3v14l-3 3z" fill="#3a8ad0" stroke="#4a86ba" stroke-width="0.8"/><path d="M1672.5 1007v-16" stroke="#222" stroke-width="1.3"/><path d="M1670.5 993l2-4l2 4z" fill="#222"/>
<path d="M1692.5 1013v6" stroke="#c4c4c4" stroke-width="1.6"/>
<path d="M1685 1007h13l3-3v-2h-16z" fill="#d0d0d0"/><path d="M1685 992h12v14h-12z" fill="#5eaee8" stroke="#4a86ba" stroke-width="0.8"/><path d="M1685 992l3-3h12l-3 3z" fill="#93d0f7" stroke="#4a86ba" stroke-width="0.8"/><path d="M1697 992l3-3v14l-3 3z" fill="#3a8ad0" stroke="#4a86ba" stroke-width="0.8"/><path d="M1702.5 1007v-16" stroke="#222" stroke-width="1.3"/><path d="M1700.5 993l2-4l2 4z" fill="#222"/>
<path d="M1722.5 1013v6" stroke="#c4c4c4" stroke-width="1.6"/>
<path d="M1715 990h15v15h-15z" fill="none" stroke="#555" stroke-width="0.9" stroke-dasharray="2 1.5"/>
<rect x="1713.5" y="988.5" width="3" height="3" fill="#3a6aaa"/>
<rect x="1728.5" y="988.5" width="3" height="3" fill="#3a6aaa"/>
<rect x="1713.5" y="1003.5" width="3" height="3" fill="#3a6aaa"/>
<path d="M1723 1007l9-9l2 2l-9 9h-2z" fill="#f5b04a"/><path d="M1732 998l2 2l1.5-1.5l-2-2z" fill="#e04040"/>
<path d="M1752.5 1013v6" stroke="#c4c4c4" stroke-width="1.6"/>
<path d="M1745 1007h13l3-3v-2h-16z" fill="#d0d0d0"/><path d="M1745 992h12v14h-12z" fill="#5eaee8" stroke="#4a86ba" stroke-width="0.8"/><path d="M1745 992l3-3h12l-3 3z" fill="#93d0f7" stroke="#4a86ba" stroke-width="0.8"/><path d="M1757 992l3-3v14l-3 3z" fill="#3a8ad0" stroke="#4a86ba" stroke-width="0.8"/><path d="M1762.5 1007v-16" stroke="#222" stroke-width="1.3"/><path d="M1760.5 993l2-4l2 4z" fill="#222"/>
<path d="M1782.5 1013v6" stroke="#c4c4c4" stroke-width="1.6"/>
<path d="M1774 1007v-12l6-6h4c5 0 9 4 9 9v9z" fill="#dadada" stroke="#666" stroke-width="1.1"/><path d="M1782 989h2c5 0 9 4 9 9l-3 3c0-5-3-9-8-9z" fill="#5eaee8" stroke="#4a86ba" stroke-width="0.7"/>
<path d="M1812.5 1013v6" stroke="#c4c4c4" stroke-width="1.6"/>
<path d="M1813 991v15M1805.5 998.5h15" stroke="#222" stroke-width="1.6"/><path d="M1813 989l-3.5 4.5h7z M1813 1008l-3.5-4.5h7z M1803.5 998.5l4.5-3.5v7z M1822.5 998.5l-4.5-3.5v7z" fill="#222"/>
<path d="M1842.5 1013v6" stroke="#c4c4c4" stroke-width="1.6"/>
<circle cx="1843" cy="991" r="2.4" fill="#4f8fcc"/>
<circle cx="1849" cy="994.5" r="2.4" fill="#4f8fcc"/>
<circle cx="1849" cy="1001.5" r="2.4" fill="#4f8fcc"/>
<circle cx="1843" cy="1005" r="2.4" fill="#4f8fcc"/>
<circle cx="1837" cy="1001.5" r="2.4" fill="#4f8fcc"/>
<circle cx="1837" cy="994.5" r="1.8" fill="none" stroke="#444" stroke-width="0.9"/>
<path d="M1850 981.5h14v3l-5 6.5h-4l-5-6.5z" fill="#555"/><path d="M1857.3 989v32" stroke="#555" stroke-width="1.8"/>
<rect x="1849" y="969.5" width="63" height="7.5" rx="3.5" fill="#cbcbcb"/>
<g transform="translate(1893 1005)"><circle r="6.5" fill="none" stroke="#888" stroke-width="4"/><path d="M0 -10v4M0 10v-4M-10 0h4M10 0h-4M-7 -7l3 3M7 7l-3-3M-7 7l3-3M7 -7l-3 3" stroke="#888" stroke-width="3.2"/></g></svg>
<div class="t" style="left:1879px;top:43px;font-size:13px;color:#555">VS</div>
</body></html>
